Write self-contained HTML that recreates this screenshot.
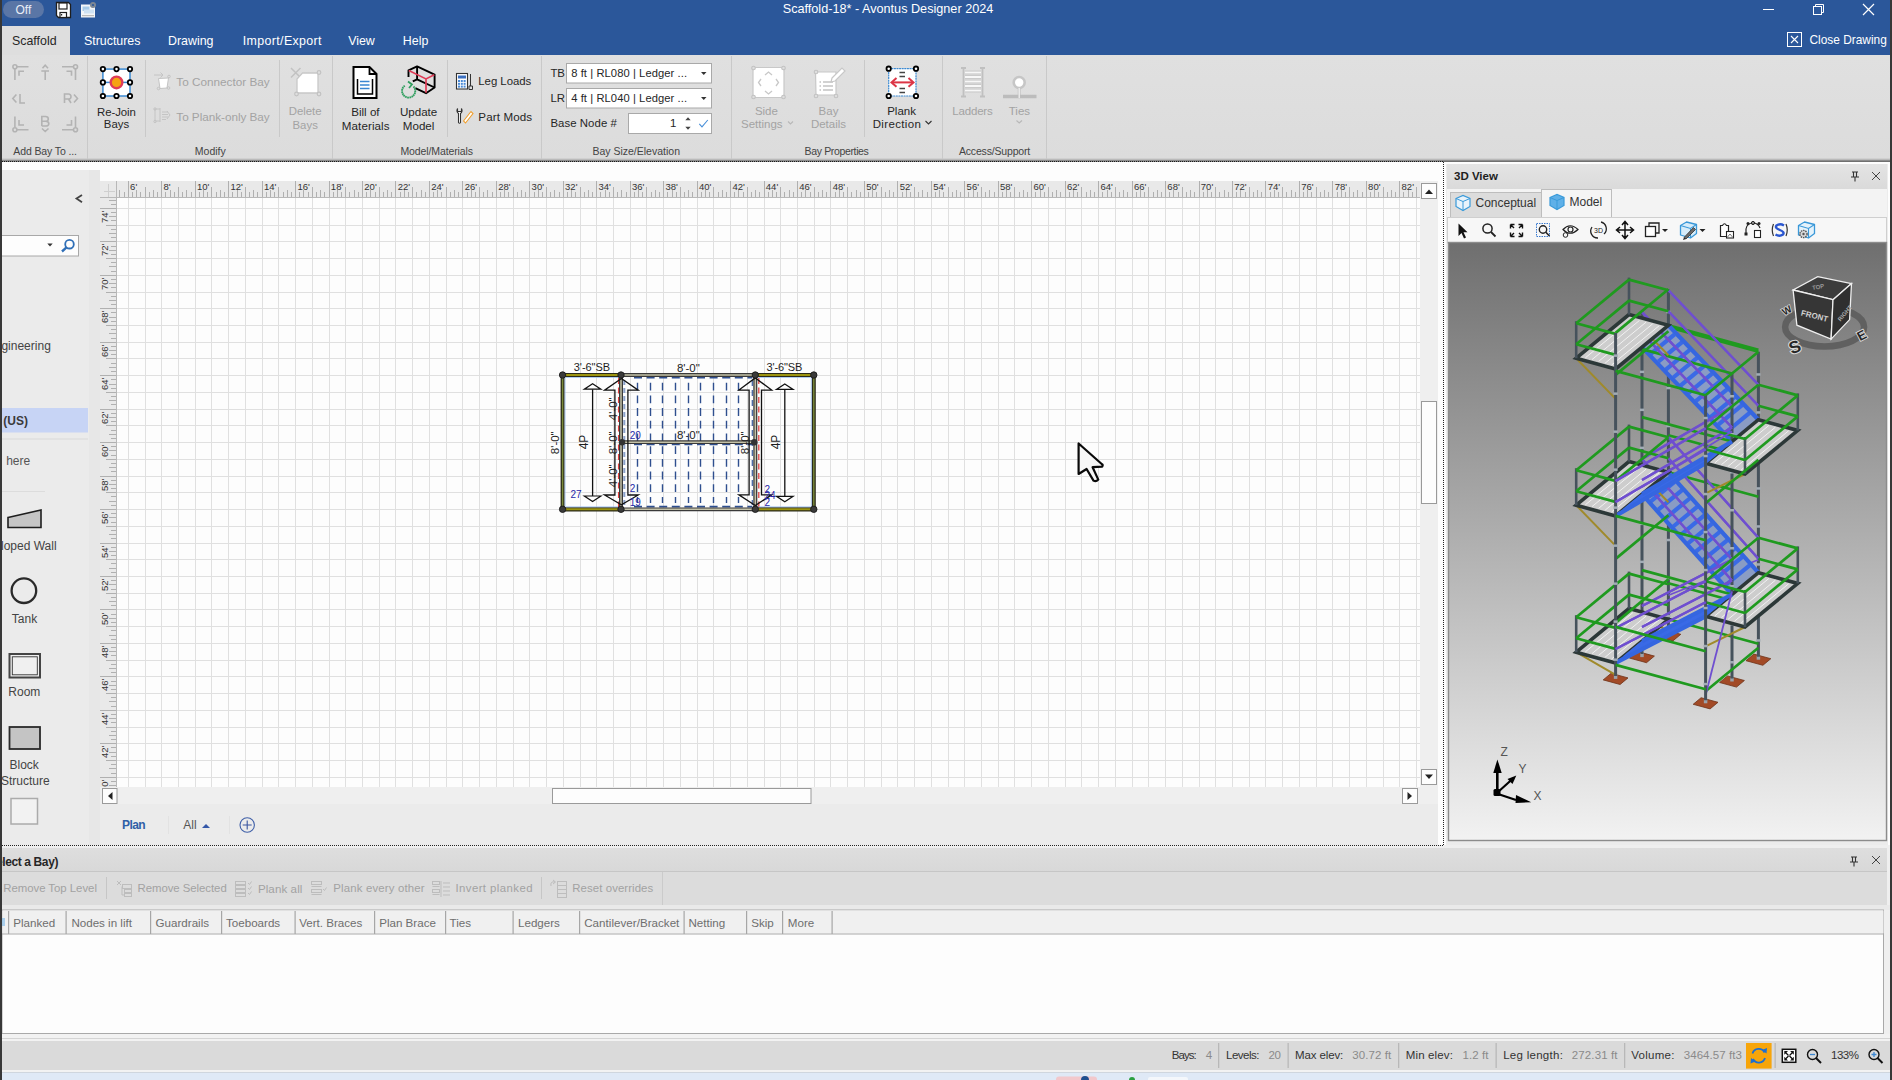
<!DOCTYPE html>
<html><head><meta charset="utf-8"><title>Avontus Designer</title>
<style>
*{box-sizing:border-box;margin:0;padding:0}
html,body{width:1892px;height:1080px;overflow:hidden;background:#f0f0f0;font-family:"Liberation Sans",sans-serif;}
#root{position:relative;width:1892px;height:1080px;overflow:hidden;background:#fdfdfd}
.a{position:absolute}
.t{position:absolute;white-space:nowrap;line-height:1}

</style></head><body>
<div id="root">
<div class="a" style="left:0px;top:0px;width:1892px;height:55px;background:#2b579a;"></div>
<div class="a" style="left:0px;top:0px;width:2px;height:1080px;background:#383838;z-index:50"></div>
<div class="a" style="left:1890px;top:0px;width:2px;height:1080px;background:#383838;z-index:50"></div>
<div class="a" style="left:3px;top:1px;width:41px;height:17px;background:#5a76a6;border-radius:9px"></div>
<div class="t" style="left:15.50px;top:3.80px;font-size:12px;color:#e9eef6;">Off</div>
<svg class="a" style="left:55px;top:1px;" width="17" height="18" viewBox="0 0 17 18"><path d="M1.5 1.5h12l2 2v13h-12l-2-2z" fill="#fff" stroke="#1e1e1e" stroke-width="1.3"/>
<rect x="4" y="2" width="8" height="6" fill="#fff" stroke="#1e1e1e" stroke-width="1.2"/>
<rect x="5" y="11.5" width="6.5" height="5" fill="#fff" stroke="#1e1e1e" stroke-width="1.2"/><rect x="6" y="13" width="1.2" height="1.5" fill="#1e1e1e"/></svg>
<svg class="a" style="left:80px;top:1px;" width="18" height="18" viewBox="0 0 18 18"><rect x="1" y="3.5" width="14" height="13" fill="#f4f6f8"/>
<rect x="2.5" y="5.5" width="7" height="4.5" fill="#a7cbe9"/>
<rect x="4" y="8.5" width="10" height="4" fill="#cfe2f3"/>
<rect x="2" y="14" width="12" height="1.2" fill="#bbb"/>
<circle cx="13" cy="4" r="3" fill="#7d8794"/><circle cx="13" cy="4" r="1.1" fill="#2b579a"/></svg>
<div class="t" style="left:782.70px;top:2.73px;font-size:12.66px;color:#fff;">Scaffold-18* - Avontus Designer 2024</div>
<div class="a" style="left:1763px;top:9px;width:11px;height:1px;background:#fff;"></div>
<svg class="a" style="left:1812px;top:3px;" width="13" height="13" viewBox="0 0 13 13"><rect x="1.5" y="3.5" width="8" height="8" fill="none" stroke="#fff"/><path d="M3.5 3.5v-2h8v8h-2" fill="none" stroke="#fff"/></svg>
<svg class="a" style="left:1862px;top:3px;" width="13" height="13" viewBox="0 0 13 13"><path d="M1 1L12 12M12 1L1 12" stroke="#fff" stroke-width="1.2"/></svg>
<div class="a" style="left:2px;top:26px;width:68px;height:30px;background:#dedede;"></div>
<div class="t" style="left:12.00px;top:34.76px;font-size:12.4px;color:#262626;">Scaffold</div>
<div class="t" style="left:84.00px;top:34.76px;font-size:12.4px;color:#fff;letter-spacing:-0.001px;">Structures</div>
<div class="t" style="left:168.00px;top:34.76px;font-size:12.4px;color:#fff;">Drawing</div>
<div class="t" style="left:242.80px;top:34.76px;font-size:12.4px;color:#fff;letter-spacing:0.365px;">Import/Export</div>
<div class="t" style="left:348.20px;top:34.76px;font-size:12.4px;color:#fff;">View</div>
<div class="t" style="left:402.80px;top:34.76px;font-size:12.4px;color:#fff;">Help</div>
<svg class="a" style="left:1787px;top:32px;" width="16" height="16" viewBox="0 0 16 16"><rect x="0.5" y="0.5" width="14" height="14" fill="none" stroke="#fff"/><path d="M4 4l7 7M11 4l-7 7" stroke="#fff" stroke-width="1.1"/></svg>
<div class="t" style="left:1809.50px;top:34.81px;font-size:11.9px;color:#fff;">Close Drawing</div>
<div class="a" style="left:2px;top:55px;width:1888px;height:106px;background:#dedede;"></div>
<div class="a" style="left:2px;top:55px;width:1888px;height:104px;background:linear-gradient(#e0e0e0,#dcdcdc);"></div>
<div class="a" style="left:2px;top:158px;width:1888px;height:1px;background:#d0d0d0;"></div>
<div class="a" style="left:2px;top:159px;width:1888px;height:1px;background:#bababa;"></div>
<div class="a" style="left:2px;top:160px;width:1888px;height:1px;background:#8c8c8c;"></div>
<div class="a" style="left:2px;top:161px;width:1441px;height:1px;background:repeating-linear-gradient(90deg,#1a1a1a 0 1px,#8a8a8a 1px 2px);"></div>
<div class="a" style="left:1443px;top:161px;width:447px;height:1px;background:#6f6f6f;"></div>
<svg class="a" style="left:0px;top:55px;" width="1892" height="107" viewBox="0 55 1892 107"><rect x="87" y="56" width="1" height="103" fill="#c9c9c9"/><rect x="332" y="56" width="1" height="103" fill="#c9c9c9"/><rect x="541" y="56" width="1" height="103" fill="#c9c9c9"/><rect x="731" y="56" width="1" height="103" fill="#c9c9c9"/><rect x="942" y="56" width="1" height="103" fill="#c9c9c9"/><rect x="1046" y="56" width="1" height="103" fill="#c9c9c9"/><rect x="145" y="60" width="1" height="77" fill="#c9c9c9"/><rect x="279" y="60" width="1" height="77" fill="#c9c9c9"/><rect x="447" y="60" width="1" height="77" fill="#c9c9c9"/><rect x="864" y="60" width="1" height="77" fill="#c9c9c9"/><g stroke="#b3b3b3" stroke-width="1.6" fill="none"><circle cx="14.9" cy="66.7" r="2"/><path d="M17 66.7H28.5M14.9 68.8V80M19 75.8V71.3H24"/><path d="M42.5 68.2L45.2 65.2L48 68.2M41.3 71H49M45.2 71V80"/><circle cx="75.5" cy="66.7" r="2"/><path d="M73.5 66.7H62M75.5 68.8V80M71.5 75.8V71.3H66.5"/><path d="M16.4 94.5L12.8 98.5L16.4 102.5M20 94V103H25"/><path d="M64.5 103V94H68.5Q71 94 71 96.7Q71 99 68.5 99H64.5M68.5 99L71 103M74 94.5L77.5 98.5L74 102.5"/><circle cx="14.9" cy="129.7" r="2"/><path d="M17 129.7H28.5M14.9 127.6V116.4M19 120V125H24"/><path d="M41.8 126V116.5H45.5Q48.3 116.5 48.3 119Q48.3 121.3 45.5 121.3H41.8M45.5 121.3Q48.8 121.3 48.8 123.7Q48.8 126 45.5 126H41.8M42 128.5L45.2 131.5L48.5 128.5"/><circle cx="75.5" cy="129.7" r="2"/><path d="M73.5 129.7H62M75.5 127.6V116.4M71.5 120V125H66.5"/></g><rect x="102.9" y="69.1" width="27.1" height="26.9" fill="#fff" stroke="#3b8ad3" stroke-width="1.5"/><path d="M102.9 82.4H130" stroke="#3b8ad3" stroke-width="1.5"/><circle cx="116.5" cy="82.4" r="5.8" fill="#f5a312" stroke="#e03c57" stroke-width="2.4"/><circle cx="102.9" cy="69.1" r="2.2" fill="#fff" stroke="#000" stroke-width="1.8"/><circle cx="102.9" cy="82.4" r="2.2" fill="#fff" stroke="#000" stroke-width="1.8"/><circle cx="102.9" cy="96" r="2.2" fill="#fff" stroke="#000" stroke-width="1.8"/><circle cx="116.5" cy="69.1" r="2.2" fill="#fff" stroke="#000" stroke-width="1.8"/><circle cx="116.5" cy="96" r="2.2" fill="#fff" stroke="#000" stroke-width="1.8"/><circle cx="130" cy="69.1" r="2.2" fill="#fff" stroke="#000" stroke-width="1.8"/><circle cx="130" cy="82.4" r="2.2" fill="#fff" stroke="#000" stroke-width="1.8"/><circle cx="130" cy="96" r="2.2" fill="#fff" stroke="#000" stroke-width="1.8"/><path d="M158.5 78.5L168.5 78L167 88L160 88.5Z" fill="#fff" stroke="#c4c4c4" stroke-width="1"/><path d="M154 75H163M160.5 72.5L163 75L160.5 77.5" stroke="#c4c4c4" stroke-width="1" fill="none"/><circle cx="158.5" cy="88.5" r="1.3" fill="none" stroke="#c4c4c4"/><circle cx="168.5" cy="88" r="1.3" fill="none" stroke="#c4c4c4"/><circle cx="169" cy="76.5" r="1.3" fill="none" stroke="#c4c4c4"/><g stroke="#c4c4c4" stroke-width="1" fill="none"><path d="M155 109V121M160 108V122M154.5 109H160M154.5 121H160M162 112H168M162 114.5H168M162 117H168M162 119.5H166M167 111L170 115L167 119"/><circle cx="155" cy="109" r="1.2"/><circle cx="155" cy="121.5" r="1.2"/></g><g stroke="#c2c2c2" stroke-width="1.5" fill="none"><path d="M291 68L300.5 77.5M300.5 68L291 77.5"/></g><path d="M302.5 73H318V93H297V79L302.5 73Z" fill="#fff" stroke="#c8c8c8" stroke-width="1.3"/><g fill="#dedede" stroke="#c2c2c2" stroke-width="1.2"><circle cx="319" cy="72.5" r="1.8"/><circle cx="296.5" cy="94" r="1.8"/><circle cx="319" cy="94" r="1.8"/></g><path d="M353.5 67H369.5L376.5 74V98H353.5Z" fill="#fff" stroke="#000" stroke-width="2"/><path d="M369.5 67V74H376.5" fill="none" stroke="#000" stroke-width="1.8"/><path d="M357.5 79V94H372.5V79" fill="none" stroke="#000" stroke-width="1.5"/><g stroke="#3a86d1" stroke-width="1.4"><path d="M360 81.5H369.5M360 85H369.5M360 88.5H369.5"/></g><g fill="none" stroke="#000" stroke-width="1.9" stroke-linejoin="round"><path d="M408.5 77V70.3L417.1 66.4L434.6 74.6V87.5L426 93.2L415.3 88.2"/><path d="M417.1 66.4V79.3L412.8 81.4M417.1 79.3L434.6 87.5"/></g><path d="M409 70.3L422 76.8" fill="none" stroke="#e8e8e8" stroke-width="0"/><path d="M408.8 70.5L426 78.9L434.3 74.8M426 78.9V92.8" fill="none" stroke="#e03c57" stroke-width="1.7"/><path d="M413.5 86.5A6.6 6.6 0 1 1 405 85.5" fill="none" stroke="#2f9e5e" stroke-width="1.9" stroke-dasharray="1.6 0.5"/><path d="M408 81.5L412 84.5L409 88" fill="none" stroke="#2f9e5e" stroke-width="1.7"/><rect x="456.5" y="73.5" width="11" height="15.5" fill="#fff" stroke="#333" stroke-width="1.1"/><rect x="458" y="75.5" width="8" height="3" fill="#3a6fc0"/><rect x="458.0" y="80.0" width="2" height="2" fill="#4a8ad6"/><rect x="460.8" y="80.0" width="2" height="2" fill="#4a8ad6"/><rect x="463.6" y="80.0" width="2" height="2" fill="#4a8ad6"/><rect x="458.0" y="82.8" width="2" height="2" fill="#4a8ad6"/><rect x="460.8" y="82.8" width="2" height="2" fill="#4a8ad6"/><rect x="463.6" y="82.8" width="2" height="2" fill="#4a8ad6"/><rect x="458.0" y="85.6" width="2" height="2" fill="#4a8ad6"/><rect x="460.8" y="85.6" width="2" height="2" fill="#4a8ad6"/><rect x="463.6" y="85.6" width="2" height="2" fill="#4a8ad6"/><path d="M470.5 74V86M469 86H472.5V89.5H469Z" stroke="#333" stroke-width="1" fill="none"/><path d="M457.5 108.5Q456 111.5 458.5 113.5V122.5Q459.5 124 460.5 122.5V113.5Q463 111.5 461.5 108.5V111.5H457.5Z" fill="#fff" stroke="#333" stroke-width="1.1"/><path d="M463.5 121L471 111.5L473 113.5L465.5 123Z" fill="#fff" stroke="#f0a030" stroke-width="1.1"/><rect x="566.5" y="63.5" width="145" height="19.5" fill="#fff" stroke="#a9a9a9"/><path d="M701 72H706.5L703.75 75Z" fill="#333"/><rect x="566.5" y="88.5" width="145" height="19.5" fill="#fff" stroke="#a9a9a9"/><path d="M701 97H706.5L703.75 100Z" fill="#333"/><rect x="628.5" y="113.5" width="83" height="20" fill="#fff" stroke="#a9a9a9"/><path d="M685.3 120.2H690.7L688 117.3ZM685.3 126.8H690.7L688 129.7Z" fill="#444"/><path d="M699.3 123.8L702 126.8L707.8 120" fill="none" stroke="#4a90d9" stroke-width="1.1"/><rect x="753" y="67.5" width="31" height="30" rx="3" fill="#fff" stroke="#c8c8c8" stroke-width="1.2"/><g fill="#dedede" stroke="#c2c2c2" stroke-width="1.1"><circle cx="753.5" cy="68" r="1.8"/><circle cx="783.5" cy="68" r="1.8"/><circle cx="753.5" cy="97" r="1.8"/><circle cx="783.5" cy="97" r="1.8"/></g><g fill="none" stroke="#c8c8c8" stroke-width="1.3"><path d="M765 75L768.5 72L772 75M765 91L768.5 94L772 91M761 79L758.5 82.5L761 86M776 79L778.5 82.5L776 86"/></g><path d="M815.5 72H836V95H816Z" fill="#fff" stroke="#c8c8c8" stroke-width="1.2"/><g stroke="#c4c4c4" stroke-width="1.4"><path d="M819.5 82H821M823 82H833M819.5 86H821M823 86H833M819.5 90H821M823 90H833"/></g><g fill="#dedede" stroke="#c2c2c2" stroke-width="1.1"><circle cx="816" cy="72" r="1.8"/><circle cx="816" cy="96" r="1.8"/><circle cx="836" cy="96" r="1.8"/></g><path d="M832 78L842 68L845 71L835 81L831 82Z" fill="#fff" stroke="#c8c8c8" stroke-width="1.2"/><rect x="888.7" y="68.7" width="27.3" height="27.3" fill="#fff" stroke="#3b8ad3" stroke-width="1.2" stroke-dasharray="2 0.6"/><g stroke="#444" stroke-width="1.5"><path d="M899.5 72.5H905M899.5 76.5H905M899.5 88.5H905M899.5 92.5H905"/></g><path d="M892 82.4H913" stroke="#dc3545" stroke-width="2"/><path d="M896.5 78L891.5 82.4L896.5 86.8M908.5 78L913.5 82.4L908.5 86.8" fill="none" stroke="#dc3545" stroke-width="2"/><circle cx="888.7" cy="68.7" r="2.2" fill="#fff" stroke="#000" stroke-width="1.8"/><circle cx="888.7" cy="96" r="2.2" fill="#fff" stroke="#000" stroke-width="1.8"/><circle cx="916" cy="68.7" r="2.2" fill="#fff" stroke="#000" stroke-width="1.8"/><circle cx="916" cy="96" r="2.2" fill="#fff" stroke="#000" stroke-width="1.8"/><g stroke="#c0c0c0" stroke-width="1.8" fill="none"><path d="M963.5 67V97M982.5 67V97M961 68H966M980 68H985M961 96.5H966M980 96.5H985"/></g><g stroke="#f7f7f7" stroke-width="2.2"><path d="M965 72.5H981M965 77H981M965 81.5H981M965 86H981M965 90.5H981"/></g><g stroke="#c4c4c4" stroke-width="0.8"><path d="M965 71H981M965 74H981M965 75.5H981M965 78.5H981M965 80H981M965 83H981M965 84.5H981M965 87.5H981M965 89H981M965 92H981"/></g><circle cx="1019.2" cy="82.5" r="5.5" fill="#fff" stroke="#c6c6c6" stroke-width="2.6"/><path d="M1019.2 88V97" stroke="#c6c6c6" stroke-width="3"/><path d="M1003 96.5H1036.5" stroke="#bcbcbc" stroke-width="3.5"/><path d="M1019.2 88V98" stroke="#f4f4f4" stroke-width="1.2"/><g fill="none" stroke-width="1.1"><path d="M788 121.5L790.5 124L793 121.5" stroke="#b8b8b8"/><path d="M925.5 121L928.5 124L931.5 121" stroke="#333"/><path d="M1016.5 120.5L1019.2 123L1022 120.5" stroke="#b8b8b8"/></g></svg>
<div class="t" style="left:13.30px;top:146.45px;font-size:10.5px;color:#444444;letter-spacing:-0.114px;">Add Bay To ...</div>
<div class="t" style="left:97.05px;top:106.86px;font-size:11.4px;color:#262626;letter-spacing:-0.064px;">Re-Join</div>
<div class="t" style="left:103.83px;top:119.46px;font-size:11.4px;color:#262626;">Bays</div>
<div class="t" style="left:176.30px;top:76.03px;font-size:11.75px;color:#a3a3a3;letter-spacing:0.000px;">To Connector Bay</div>
<div class="t" style="left:176.30px;top:110.73px;font-size:11.75px;color:#a3a3a3;letter-spacing:-0.040px;">To Plank-only Bay</div>
<div class="t" style="left:288.85px;top:105.86px;font-size:11.4px;color:#a3a3a3;letter-spacing:-0.051px;">Delete</div>
<div class="t" style="left:292.53px;top:119.56px;font-size:11.4px;color:#a3a3a3;">Bays</div>
<div class="t" style="left:194.84px;top:146.45px;font-size:10.5px;color:#444444;">Modify</div>
<div class="t" style="left:351.22px;top:105.84px;font-size:11.6px;color:#262626;">Bill of</div>
<div class="t" style="left:341.80px;top:119.54px;font-size:11.6px;color:#262626;letter-spacing:0.093px;">Materials</div>
<div class="t" style="left:399.90px;top:105.84px;font-size:11.6px;color:#262626;">Update</div>
<div class="t" style="left:402.80px;top:119.54px;font-size:11.6px;color:#262626;">Model</div>
<div class="t" style="left:478.30px;top:76.06px;font-size:11.4px;color:#262626;letter-spacing:-0.031px;">Leg Loads</div>
<div class="t" style="left:478.30px;top:110.74px;font-size:11.6px;color:#262626;letter-spacing:0.130px;">Part Mods</div>
<div class="t" style="left:400.40px;top:146.45px;font-size:10.5px;color:#444444;letter-spacing:-0.108px;">Model/Materials</div>
<div class="t" style="left:550.40px;top:67.66px;font-size:11.4px;color:#262626;">TB</div>
<div class="t" style="left:550.40px;top:92.66px;font-size:11.4px;color:#262626;">LR</div>
<div class="t" style="left:571.20px;top:67.88px;font-size:11.2px;color:#262626;letter-spacing:0.077px;">8 ft | RL080 | Ledger ...</div>
<div class="t" style="left:571.20px;top:92.88px;font-size:11.2px;color:#262626;letter-spacing:0.077px;">4 ft | RL040 | Ledger ...</div>
<div class="t" style="left:550.40px;top:117.66px;font-size:11.4px;color:#262626;letter-spacing:0.059px;">Base Node #</div>
<div class="t" style="left:670.00px;top:117.86px;font-size:11.4px;color:#262626;">1</div>
<div class="t" style="left:592.43px;top:146.45px;font-size:10.5px;color:#444444;">Bay Size/Elevation</div>
<div class="t" style="left:754.89px;top:105.85px;font-size:11.5px;color:#a3a3a3;">Side</div>
<div class="t" style="left:741.00px;top:119.05px;font-size:11.5px;color:#a3a3a3;">Settings</div>
<div class="t" style="left:818.59px;top:105.85px;font-size:11.5px;color:#a3a3a3;">Bay</div>
<div class="t" style="left:810.92px;top:119.05px;font-size:11.5px;color:#a3a3a3;">Details</div>
<div class="t" style="left:887.20px;top:105.85px;font-size:11.5px;color:#262626;letter-spacing:0.008px;">Plank</div>
<div class="t" style="left:872.70px;top:119.05px;font-size:11.5px;color:#262626;letter-spacing:0.353px;">Direction</div>
<div class="t" style="left:804.55px;top:146.45px;font-size:10.5px;color:#444444;letter-spacing:-0.351px;">Bay Properties</div>
<div class="t" style="left:952.20px;top:105.85px;font-size:11.5px;color:#a3a3a3;letter-spacing:-0.160px;">Ladders</div>
<div class="t" style="left:1008.75px;top:105.85px;font-size:11.5px;color:#a3a3a3;">Ties</div>
<div class="t" style="left:958.95px;top:146.45px;font-size:10.5px;color:#444444;letter-spacing:-0.172px;">Access/Support</div>
<div class="a" style="left:2px;top:162px;width:1441px;height:683px;background:#fdfdfd;"></div>
<div class="a" style="left:2px;top:170px;width:98px;height:675px;background:#ebebeb;"></div>
<div class="a" style="left:89px;top:170px;width:11px;height:675px;background:#e7e7e7;"></div>
<svg class="a" style="left:0px;top:162px;" width="100" height="683" viewBox="0 162 100 683"><path d="M82 195L76.5 198.6L82 202.2" fill="none" stroke="#444" stroke-width="1.8"/><rect x="1.5" y="235.5" width="77" height="20.5" fill="#fdfdfd" stroke="#a8a8a8"/><path d="M47.3 243.6H52.7L50 246.4Z" fill="#333"/><circle cx="69.5" cy="244.2" r="4.3" fill="none" stroke="#2f6fb7" stroke-width="1.8"/><path d="M66.5 247.4L62 251.5" stroke="#2f6fb7" stroke-width="2.4"/><rect x="2" y="408" width="86" height="24.5" fill="#c7d4f5"/><rect x="2" y="438.5" width="86" height="1" fill="#dadada"/><rect x="2" y="491" width="43" height="1" fill="#dcdcdc"/><path d="M8 517.5L41 510V527.5H8Z" fill="#c5c5c5" stroke="#1e1e1e" stroke-width="1.6"/><circle cx="23.9" cy="590.7" r="12.3" fill="none" stroke="#2a2a2a" stroke-width="2.3"/><rect x="9.5" y="654" width="30.5" height="23.5" fill="#f0f0f0" stroke="#444" stroke-width="2"/><rect x="12.3" y="656.8" width="25" height="18" fill="none" stroke="#333" stroke-width="0.9"/><rect x="9.5" y="727" width="30.5" height="22" fill="#c4c4c4" stroke="#2a2a2a" stroke-width="1.8"/><rect x="11" y="798.5" width="26.5" height="25.5" fill="#f2f2f2" stroke="#ababab" stroke-width="1.5"/></svg>
<div class="t" style="left:-13.25px;top:339.80px;font-size:12px;color:#444;">Engineering</div>
<div class="t" style="left:3.34px;top:414.80px;font-size:12px;color:#3a3a3a;font-weight:700;">(US)</div>
<div class="t" style="left:6.20px;top:455.30px;font-size:12px;color:#555;">here</div>
<div class="t" style="left:-6.99px;top:539.60px;font-size:12px;color:#444;">Sloped Wall</div>
<div class="t" style="left:11.80px;top:613.30px;font-size:12px;color:#444;">Tank</div>
<div class="t" style="left:8.30px;top:686.10px;font-size:12px;color:#444;">Room</div>
<div class="t" style="left:9.50px;top:759.30px;font-size:12px;color:#444;">Block</div>
<div class="t" style="left:1.01px;top:775.40px;font-size:12px;color:#444;">Structure</div>
<svg class="a" style="left:100px;top:162px;" width="1345" height="684" viewBox="100 162 1345 684"><defs><pattern id="dots" width="2" height="1" patternUnits="userSpaceOnUse"><rect width="1" height="1" fill="#222"/></pattern><pattern id="dotsv" width="1" height="2" patternUnits="userSpaceOnUse"><rect width="1" height="1" fill="#222"/></pattern></defs><rect x="117" y="198" width="1303" height="589" fill="#fdfdfd"/><path d="M128.5 198V787M145.5 198V787M161.5 198V787M178.5 198V787M195.5 198V787M211.5 198V787M228.5 198V787M245.5 198V787M262.5 198V787M278.5 198V787M295.5 198V787M312.5 198V787M329.5 198V787M345.5 198V787M362.5 198V787M379.5 198V787M395.5 198V787M412.5 198V787M429.5 198V787M446.5 198V787M462.5 198V787M479.5 198V787M496.5 198V787M513.5 198V787M529.5 198V787M546.5 198V787M563.5 198V787M580.5 198V787M596.5 198V787M613.5 198V787M630.5 198V787M646.5 198V787M663.5 198V787M680.5 198V787M697.5 198V787M713.5 198V787M730.5 198V787M747.5 198V787M764.5 198V787M780.5 198V787M797.5 198V787M814.5 198V787M830.5 198V787M847.5 198V787M864.5 198V787M881.5 198V787M897.5 198V787M914.5 198V787M931.5 198V787M948.5 198V787M964.5 198V787M981.5 198V787M998.5 198V787M1014.5 198V787M1031.5 198V787M1048.5 198V787M1065.5 198V787M1081.5 198V787M1098.5 198V787M1115.5 198V787M1132.5 198V787M1148.5 198V787M1165.5 198V787M1182.5 198V787M1199.5 198V787M1215.5 198V787M1232.5 198V787M1249.5 198V787M1265.5 198V787M1282.5 198V787M1299.5 198V787M1316.5 198V787M1332.5 198V787M1349.5 198V787M1366.5 198V787M1383.5 198V787M1399.5 198V787M1416.5 198V787M117 208.5H1420M117 225.5H1420M117 241.5H1420M117 258.5H1420M117 275.5H1420M117 292.5H1420M117 308.5H1420M117 325.5H1420M117 342.5H1420M117 358.5H1420M117 375.5H1420M117 392.5H1420M117 409.5H1420M117 425.5H1420M117 442.5H1420M117 459.5H1420M117 476.5H1420M117 492.5H1420M117 509.5H1420M117 526.5H1420M117 543.5H1420M117 559.5H1420M117 576.5H1420M117 593.5H1420M117 609.5H1420M117 626.5H1420M117 643.5H1420M117 660.5H1420M117 676.5H1420M117 693.5H1420M117 710.5H1420M117 727.5H1420M117 743.5H1420M117 760.5H1420M117 777.5H1420" stroke="#e0e0e0" stroke-width="1" shape-rendering="crispEdges"/><rect x="100" y="181" width="1320" height="17" fill="#e9e9e9"/><rect x="100" y="181" width="17" height="606" fill="#e9e9e9"/><path d="M119.5 198V190M124.5 198V192M128.5 198V181M132.5 198V192M136.5 198V190M140.5 198V192M145.5 198V187M149.5 198V192M153.5 198V190M157.5 198V192M161.5 198V181M165.5 198V192M170.5 198V190M174.5 198V192M178.5 198V187M182.5 198V192M186.5 198V190M191.5 198V192M195.5 198V181M199.5 198V192M203.5 198V190M207.5 198V192M211.5 198V187M216.5 198V192M220.5 198V190M224.5 198V192M228.5 198V181M232.5 198V192M237.5 198V190M241.5 198V192M245.5 198V187M249.5 198V192M253.5 198V190M257.5 198V192M262.5 198V181M266.5 198V192M270.5 198V190M274.5 198V192M278.5 198V187M283.5 198V192M287.5 198V190M291.5 198V192M295.5 198V181M299.5 198V192M303.5 198V190M308.5 198V192M312.5 198V187M316.5 198V192M320.5 198V190M324.5 198V192M329.5 198V181M333.5 198V192M337.5 198V190M341.5 198V192M345.5 198V187M349.5 198V192M354.5 198V190M358.5 198V192M362.5 198V181M366.5 198V192M370.5 198V190M375.5 198V192M379.5 198V187M383.5 198V192M387.5 198V190M391.5 198V192M395.5 198V181M400.5 198V192M404.5 198V190M408.5 198V192M412.5 198V187M416.5 198V192M421.5 198V190M425.5 198V192M429.5 198V181M433.5 198V192M437.5 198V190M441.5 198V192M446.5 198V187M450.5 198V192M454.5 198V190M458.5 198V192M462.5 198V181M467.5 198V192M471.5 198V190M475.5 198V192M479.5 198V187M483.5 198V192M487.5 198V190M492.5 198V192M496.5 198V181M500.5 198V192M504.5 198V190M508.5 198V192M513.5 198V187M517.5 198V192M521.5 198V190M525.5 198V192M529.5 198V181M534.5 198V192M538.5 198V190M542.5 198V192M546.5 198V187M550.5 198V192M554.5 198V190M559.5 198V192M563.5 198V181M567.5 198V192M571.5 198V190M575.5 198V192M580.5 198V187M584.5 198V192M588.5 198V190M592.5 198V192M596.5 198V181M600.5 198V192M605.5 198V190M609.5 198V192M613.5 198V187M617.5 198V192M621.5 198V190M626.5 198V192M630.5 198V181M634.5 198V192M638.5 198V190M642.5 198V192M646.5 198V187M651.5 198V192M655.5 198V190M659.5 198V192M663.5 198V181M667.5 198V192M672.5 198V190M676.5 198V192M680.5 198V187M684.5 198V192M688.5 198V190M692.5 198V192M697.5 198V181M701.5 198V192M705.5 198V190M709.5 198V192M713.5 198V187M718.5 198V192M722.5 198V190M726.5 198V192M730.5 198V181M734.5 198V192M738.5 198V190M743.5 198V192M747.5 198V187M751.5 198V192M755.5 198V190M759.5 198V192M764.5 198V181M768.5 198V192M772.5 198V190M776.5 198V192M780.5 198V187M784.5 198V192M789.5 198V190M793.5 198V192M797.5 198V181M801.5 198V192M805.5 198V190M810.5 198V192M814.5 198V187M818.5 198V192M822.5 198V190M826.5 198V192M830.5 198V181M835.5 198V192M839.5 198V190M843.5 198V192M847.5 198V187M851.5 198V192M856.5 198V190M860.5 198V192M864.5 198V181M868.5 198V192M872.5 198V190M876.5 198V192M881.5 198V187M885.5 198V192M889.5 198V190M893.5 198V192M897.5 198V181M902.5 198V192M906.5 198V190M910.5 198V192M914.5 198V187M918.5 198V192M922.5 198V190M927.5 198V192M931.5 198V181M935.5 198V192M939.5 198V190M943.5 198V192M948.5 198V187M952.5 198V192M956.5 198V190M960.5 198V192M964.5 198V181M968.5 198V192M973.5 198V190M977.5 198V192M981.5 198V187M985.5 198V192M989.5 198V190M994.5 198V192M998.5 198V181M1002.5 198V192M1006.5 198V190M1010.5 198V192M1014.5 198V187M1019.5 198V192M1023.5 198V190M1027.5 198V192M1031.5 198V181M1035.5 198V192M1040.5 198V190M1044.5 198V192M1048.5 198V187M1052.5 198V192M1056.5 198V190M1060.5 198V192M1065.5 198V181M1069.5 198V192M1073.5 198V190M1077.5 198V192M1081.5 198V187M1086.5 198V192M1090.5 198V190M1094.5 198V192M1098.5 198V181M1102.5 198V192M1107.5 198V190M1111.5 198V192M1115.5 198V187M1119.5 198V192M1123.5 198V190M1127.5 198V192M1132.5 198V181M1136.5 198V192M1140.5 198V190M1144.5 198V192M1148.5 198V187M1153.5 198V192M1157.5 198V190M1161.5 198V192M1165.5 198V181M1169.5 198V192M1173.5 198V190M1178.5 198V192M1182.5 198V187M1186.5 198V192M1190.5 198V190M1194.5 198V192M1199.5 198V181M1203.5 198V192M1207.5 198V190M1211.5 198V192M1215.5 198V187M1219.5 198V192M1224.5 198V190M1228.5 198V192M1232.5 198V181M1236.5 198V192M1240.5 198V190M1245.5 198V192M1249.5 198V187M1253.5 198V192M1257.5 198V190M1261.5 198V192M1265.5 198V181M1270.5 198V192M1274.5 198V190M1278.5 198V192M1282.5 198V187M1286.5 198V192M1291.5 198V190M1295.5 198V192M1299.5 198V181M1303.5 198V192M1307.5 198V190M1311.5 198V192M1316.5 198V187M1320.5 198V192M1324.5 198V190M1328.5 198V192M1332.5 198V181M1337.5 198V192M1341.5 198V190M1345.5 198V192M1349.5 198V187M1353.5 198V192M1357.5 198V190M1362.5 198V192M1366.5 198V181M1370.5 198V192M1374.5 198V190M1378.5 198V192M1383.5 198V187M1387.5 198V192M1391.5 198V190M1395.5 198V192M1399.5 198V181M1403.5 198V192M1408.5 198V190M1412.5 198V192M1416.5 198V187M117 200.5H109M117 204.5H111M117 208.5H100M117 212.5H111M117 216.5H109M117 220.5H111M117 225.5H106M117 229.5H111M117 233.5H109M117 237.5H111M117 241.5H100M117 246.5H111M117 250.5H109M117 254.5H111M117 258.5H106M117 262.5H111M117 266.5H109M117 271.5H111M117 275.5H100M117 279.5H111M117 283.5H109M117 287.5H111M117 292.5H106M117 296.5H111M117 300.5H109M117 304.5H111M117 308.5H100M117 312.5H111M117 317.5H109M117 321.5H111M117 325.5H106M117 329.5H111M117 333.5H109M117 338.5H111M117 342.5H100M117 346.5H111M117 350.5H109M117 354.5H111M117 358.5H106M117 363.5H111M117 367.5H109M117 371.5H111M117 375.5H100M117 379.5H111M117 384.5H109M117 388.5H111M117 392.5H106M117 396.5H111M117 400.5H109M117 404.5H111M117 409.5H100M117 413.5H111M117 417.5H109M117 421.5H111M117 425.5H106M117 430.5H111M117 434.5H109M117 438.5H111M117 442.5H100M117 446.5H111M117 450.5H109M117 455.5H111M117 459.5H106M117 463.5H111M117 467.5H109M117 471.5H111M117 476.5H100M117 480.5H111M117 484.5H109M117 488.5H111M117 492.5H106M117 496.5H111M117 501.5H109M117 505.5H111M117 509.5H100M117 513.5H111M117 517.5H109M117 522.5H111M117 526.5H106M117 530.5H111M117 534.5H109M117 538.5H111M117 543.5H100M117 547.5H111M117 551.5H109M117 555.5H111M117 559.5H106M117 563.5H111M117 568.5H109M117 572.5H111M117 576.5H100M117 580.5H111M117 584.5H109M117 589.5H111M117 593.5H106M117 597.5H111M117 601.5H109M117 605.5H111M117 609.5H100M117 614.5H111M117 618.5H109M117 622.5H111M117 626.5H106M117 630.5H111M117 635.5H109M117 639.5H111M117 643.5H100M117 647.5H111M117 651.5H109M117 655.5H111M117 660.5H106M117 664.5H111M117 668.5H109M117 672.5H111M117 676.5H100M117 681.5H111M117 685.5H109M117 689.5H111M117 693.5H106M117 697.5H111M117 701.5H109M117 706.5H111M117 710.5H100M117 714.5H111M117 718.5H109M117 722.5H111M117 727.5H106M117 731.5H111M117 735.5H109M117 739.5H111M117 743.5H100M117 747.5H111M117 752.5H109M117 756.5H111M117 760.5H106M117 764.5H111M117 768.5H109M117 773.5H111M117 777.5H100M117 781.5H111M117 785.5H109" stroke="#b0b0b0" stroke-width="1" shape-rendering="crispEdges"/><path d="M100 197.5H1420M116.5 181V787" stroke="#b8b8b8" stroke-width="1" shape-rendering="crispEdges"/><path d="M104 191.5H115M108.5 184V197" stroke="#cfcfcf" stroke-width="1" shape-rendering="crispEdges"/><rect x="1420" y="181" width="18" height="623" fill="#efefef"/><rect x="1421.5" y="183.5" width="15" height="15" fill="#fdfdfd" stroke="#9a9a9a"/><path d="M1425 194H1433L1429 189.5Z" fill="#222"/><rect x="1421.5" y="769.5" width="15" height="15" fill="#fdfdfd" stroke="#9a9a9a"/><path d="M1425 774.5H1433L1429 779Z" fill="#222"/><rect x="1421.5" y="401.5" width="15" height="102" fill="#fdfdfd" stroke="#9a9a9a"/><rect x="100" y="787" width="1320" height="17" fill="#efefef"/><rect x="102.5" y="788.5" width="14.5" height="15" fill="#fdfdfd" stroke="#9a9a9a"/><path d="M112.5 792V800L108 796Z" fill="#222"/><rect x="1402.5" y="788.5" width="15" height="15" fill="#fdfdfd" stroke="#9a9a9a"/><path d="M1407.5 792V800L1412 796Z" fill="#222"/><rect x="552.5" y="788.5" width="258.5" height="15" fill="#fdfdfd" stroke="#9a9a9a"/><rect x="100" y="804" width="1338" height="41" fill="#ebebeb"/><rect x="168" y="816" width="1" height="18" fill="#e2e2e2"/><rect x="229" y="816" width="1" height="18" fill="#e2e2e2"/><path d="M202 828H210L206 824Z" fill="#3457a8"/><circle cx="247.2" cy="825" r="7.2" fill="none" stroke="#4060a8" stroke-width="1.1"/><path d="M247.2 820.5V829.5M242.7 825H251.7" stroke="#3a55a0" stroke-width="1.1"/><rect x="1443" y="162" width="1" height="683" fill="url(#dotsv)"/></svg>
<div class="a" style="left:2px;top:845px;width:1441px;height:1px;background:repeating-linear-gradient(90deg,#222 0 1px,transparent 1px 2px);z-index:4"></div>
<div class="t" style="left:130.10px;top:182.45px;font-size:9.5px;color:#333;">6'</div>
<div class="t" style="left:163.56px;top:182.45px;font-size:9.5px;color:#333;">8'</div>
<div class="t" style="left:197.02px;top:182.45px;font-size:9.5px;color:#333;">10'</div>
<div class="t" style="left:230.48px;top:182.45px;font-size:9.5px;color:#333;">12'</div>
<div class="t" style="left:263.94px;top:182.45px;font-size:9.5px;color:#333;">14'</div>
<div class="t" style="left:297.40px;top:182.45px;font-size:9.5px;color:#333;">16'</div>
<div class="t" style="left:330.86px;top:182.45px;font-size:9.5px;color:#333;">18'</div>
<div class="t" style="left:364.32px;top:182.45px;font-size:9.5px;color:#333;">20'</div>
<div class="t" style="left:397.78px;top:182.45px;font-size:9.5px;color:#333;">22'</div>
<div class="t" style="left:431.24px;top:182.45px;font-size:9.5px;color:#333;">24'</div>
<div class="t" style="left:464.70px;top:182.45px;font-size:9.5px;color:#333;">26'</div>
<div class="t" style="left:498.16px;top:182.45px;font-size:9.5px;color:#333;">28'</div>
<div class="t" style="left:531.62px;top:182.45px;font-size:9.5px;color:#333;">30'</div>
<div class="t" style="left:565.08px;top:182.45px;font-size:9.5px;color:#333;">32'</div>
<div class="t" style="left:598.54px;top:182.45px;font-size:9.5px;color:#333;">34'</div>
<div class="t" style="left:632.00px;top:182.45px;font-size:9.5px;color:#333;">36'</div>
<div class="t" style="left:665.46px;top:182.45px;font-size:9.5px;color:#333;">38'</div>
<div class="t" style="left:698.92px;top:182.45px;font-size:9.5px;color:#333;">40'</div>
<div class="t" style="left:732.38px;top:182.45px;font-size:9.5px;color:#333;">42'</div>
<div class="t" style="left:765.84px;top:182.45px;font-size:9.5px;color:#333;">44'</div>
<div class="t" style="left:799.30px;top:182.45px;font-size:9.5px;color:#333;">46'</div>
<div class="t" style="left:832.76px;top:182.45px;font-size:9.5px;color:#333;">48'</div>
<div class="t" style="left:866.22px;top:182.45px;font-size:9.5px;color:#333;">50'</div>
<div class="t" style="left:899.68px;top:182.45px;font-size:9.5px;color:#333;">52'</div>
<div class="t" style="left:933.14px;top:182.45px;font-size:9.5px;color:#333;">54'</div>
<div class="t" style="left:966.60px;top:182.45px;font-size:9.5px;color:#333;">56'</div>
<div class="t" style="left:1000.06px;top:182.45px;font-size:9.5px;color:#333;">58'</div>
<div class="t" style="left:1033.52px;top:182.45px;font-size:9.5px;color:#333;">60'</div>
<div class="t" style="left:1066.98px;top:182.45px;font-size:9.5px;color:#333;">62'</div>
<div class="t" style="left:1100.44px;top:182.45px;font-size:9.5px;color:#333;">64'</div>
<div class="t" style="left:1133.90px;top:182.45px;font-size:9.5px;color:#333;">66'</div>
<div class="t" style="left:1167.36px;top:182.45px;font-size:9.5px;color:#333;">68'</div>
<div class="t" style="left:1200.82px;top:182.45px;font-size:9.5px;color:#333;">70'</div>
<div class="t" style="left:1234.28px;top:182.45px;font-size:9.5px;color:#333;">72'</div>
<div class="t" style="left:1267.74px;top:182.45px;font-size:9.5px;color:#333;">74'</div>
<div class="t" style="left:1301.20px;top:182.45px;font-size:9.5px;color:#333;">76'</div>
<div class="t" style="left:1334.66px;top:182.45px;font-size:9.5px;color:#333;">78'</div>
<div class="t" style="left:1368.12px;top:182.45px;font-size:9.5px;color:#333;">80'</div>
<div class="t" style="left:1401.58px;top:182.45px;font-size:9.5px;color:#333;">82'</div>
<div class="a" style="left:100px;top:198px;width:17px;height:589px;overflow:hidden"><div class="t" style="left:0.40px;top:24.98px;font-size:9.5px;color:#333;transform-origin:0 0;transform:rotate(-90deg)">74'</div><div class="t" style="left:0.40px;top:58.44px;font-size:9.5px;color:#333;transform-origin:0 0;transform:rotate(-90deg)">72'</div><div class="t" style="left:0.40px;top:91.90px;font-size:9.5px;color:#333;transform-origin:0 0;transform:rotate(-90deg)">70'</div><div class="t" style="left:0.40px;top:125.36px;font-size:9.5px;color:#333;transform-origin:0 0;transform:rotate(-90deg)">68'</div><div class="t" style="left:0.40px;top:158.82px;font-size:9.5px;color:#333;transform-origin:0 0;transform:rotate(-90deg)">66'</div><div class="t" style="left:0.40px;top:192.28px;font-size:9.5px;color:#333;transform-origin:0 0;transform:rotate(-90deg)">64'</div><div class="t" style="left:0.40px;top:225.74px;font-size:9.5px;color:#333;transform-origin:0 0;transform:rotate(-90deg)">62'</div><div class="t" style="left:0.40px;top:259.20px;font-size:9.5px;color:#333;transform-origin:0 0;transform:rotate(-90deg)">60'</div><div class="t" style="left:0.40px;top:292.66px;font-size:9.5px;color:#333;transform-origin:0 0;transform:rotate(-90deg)">58'</div><div class="t" style="left:0.40px;top:326.12px;font-size:9.5px;color:#333;transform-origin:0 0;transform:rotate(-90deg)">56'</div><div class="t" style="left:0.40px;top:359.58px;font-size:9.5px;color:#333;transform-origin:0 0;transform:rotate(-90deg)">54'</div><div class="t" style="left:0.40px;top:393.04px;font-size:9.5px;color:#333;transform-origin:0 0;transform:rotate(-90deg)">52'</div><div class="t" style="left:0.40px;top:426.50px;font-size:9.5px;color:#333;transform-origin:0 0;transform:rotate(-90deg)">50'</div><div class="t" style="left:0.40px;top:459.96px;font-size:9.5px;color:#333;transform-origin:0 0;transform:rotate(-90deg)">48'</div><div class="t" style="left:0.40px;top:493.42px;font-size:9.5px;color:#333;transform-origin:0 0;transform:rotate(-90deg)">46'</div><div class="t" style="left:0.40px;top:526.88px;font-size:9.5px;color:#333;transform-origin:0 0;transform:rotate(-90deg)">44'</div><div class="t" style="left:0.40px;top:560.34px;font-size:9.5px;color:#333;transform-origin:0 0;transform:rotate(-90deg)">42'</div><div class="t" style="left:0.40px;top:593.80px;font-size:9.5px;color:#333;transform-origin:0 0;transform:rotate(-90deg)">40'</div></div>
<div class="t" style="left:122.00px;top:819.10px;font-size:12px;color:#2f5fa7;font-weight:700;letter-spacing:-0.581px;">Plan</div>
<div class="t" style="left:183.30px;top:819.10px;font-size:12px;color:#555;">All</div>
<svg class="a" style="left:540px;top:355px;z-index:2" width="290" height="160" viewBox="540 355 290 160"><path d="M637.5 382.7V503" stroke="#2f4f8f" stroke-width="1.4" stroke-dasharray="7.8 4.9"/><path d="M650.5 382.7V503" stroke="#2f4f8f" stroke-width="1.4" stroke-dasharray="7.8 4.9"/><path d="M662.5 382.7V503" stroke="#2f4f8f" stroke-width="1.4" stroke-dasharray="7.8 4.9"/><path d="M675.5 382.7V503" stroke="#2f4f8f" stroke-width="1.4" stroke-dasharray="7.8 4.9"/><path d="M688.5 382.7V503" stroke="#2f4f8f" stroke-width="1.4" stroke-dasharray="7.8 4.9"/><path d="M700.5 382.7V503" stroke="#2f4f8f" stroke-width="1.4" stroke-dasharray="7.8 4.9"/><path d="M713.5 382.7V503" stroke="#2f4f8f" stroke-width="1.4" stroke-dasharray="7.8 4.9"/><path d="M726.5 382.7V503" stroke="#2f4f8f" stroke-width="1.4" stroke-dasharray="7.8 4.9"/><path d="M738.5 382.7V503" stroke="#2f4f8f" stroke-width="1.4" stroke-dasharray="7.8 4.9"/><path d="M634 377.7H752.3M634 506.6H752.3M634 444.5H752.3" stroke="#2f4f8f" stroke-width="1.7" stroke-dasharray="8 4.6"/><path d="M618.6 378V507" stroke="#e04040" stroke-width="1.3" stroke-dasharray="6 3.5"/><path d="M758.8 378V507" stroke="#e04040" stroke-width="1.3" stroke-dasharray="6 3.5"/><path d="M624.3 380V505" stroke="#8aa0c8" stroke-width="2" stroke-dasharray="5 3"/><path d="M752.3 380V505" stroke="#3d5f9e" stroke-width="1.2" stroke-dasharray="6 4"/><path d="M562.6 375.0H621.0M562.6 509.3H621.0M755.3 375.0H813.8M755.3 509.3H813.8" stroke="#2b2b1a" stroke-width="4.2" fill="none"/><path d="M562.6 375.0H621.0M562.6 509.3H621.0M755.3 375.0H813.8M755.3 509.3H813.8" stroke="#9c9410" stroke-width="2" fill="none"/><path d="M562.6 375.0V509.3M813.8 375.0V509.3" stroke="#2b2b1a" stroke-width="4"/><path d="M562.6 375.0V509.3M813.8 375.0V509.3" stroke="#7a8a3a" stroke-width="1.4"/><path d="M565.1 378.0V506.3M565.6 377.5H618.0M565.6 506.8H618.0M811.3 378.0V506.3M758.3 377.5H810.8M758.3 506.8H810.8" stroke="#9cc0f0" stroke-width="0.8"/><path d="M621.0 375.0H755.3M621.0 509.3H755.3M621.0 442.2H755.3" stroke="#3a3a3a" stroke-width="3.8" fill="none"/><path d="M621.0 375.0H755.3M621.0 509.3H755.3M621.0 442.2H755.3" stroke="#c4c2a8" stroke-width="1.5" fill="none"/><path d="M621.0 375.0V509.3M755.3 375.0V509.3" stroke="#3a3a3a" stroke-width="4.0" fill="none"/><path d="M621.0 375.0V509.3M755.3 375.0V509.3" stroke="#c4c2a8" stroke-width="1.5" fill="none"/><path d="M621.4 378.5L638.1999999999999 390.2H627.9V495H638.1999999999999L621.4 504.7L604.6 495H614.9V390.2H604.6Z" fill="none" stroke="#111" stroke-width="1.3"/><path d="M755.3 377.9L771.6999999999999 390.1H761.5V494.8H771.6999999999999L755.3 505.5L738.9 494.8H749.0999999999999V390.1H738.9Z" fill="none" stroke="#111" stroke-width="1.3"/><path d="M592.6 389.2V496" stroke="#111" stroke-width="1.3"/><path d="M592.6 383.8L600.9 389.2H584.3000000000001Z M592.6 501.6L600.9 496H584.3000000000001Z" fill="#fff" stroke="#111" stroke-width="1.2"/><path d="M784.8 389.4V496.3" stroke="#111" stroke-width="1.3"/><path d="M784.8 384.0L793.0999999999999 389.4H776.5Z M784.8 501.7L793.0999999999999 496.3H776.5Z" fill="#fff" stroke="#111" stroke-width="1.2"/><circle cx="622.0" cy="442.2" r="3.2" fill="#333"/><circle cx="754.3" cy="442.2" r="3.2" fill="#333"/><circle cx="562.6" cy="375.0" r="3.2" fill="#3a3a3a" stroke="#1a1a1a" stroke-width="0.9"/><circle cx="562.6" cy="509.3" r="3.2" fill="#3a3a3a" stroke="#1a1a1a" stroke-width="0.9"/><circle cx="621.0" cy="375.0" r="3.2" fill="#3a3a3a" stroke="#1a1a1a" stroke-width="0.9"/><circle cx="621.0" cy="509.3" r="3.2" fill="#3a3a3a" stroke="#1a1a1a" stroke-width="0.9"/><circle cx="755.3" cy="375.0" r="3.2" fill="#3a3a3a" stroke="#1a1a1a" stroke-width="0.9"/><circle cx="755.3" cy="509.3" r="3.2" fill="#3a3a3a" stroke="#1a1a1a" stroke-width="0.9"/><circle cx="813.8" cy="375.0" r="3.2" fill="#3a3a3a" stroke="#1a1a1a" stroke-width="0.9"/><circle cx="813.8" cy="509.3" r="3.2" fill="#3a3a3a" stroke="#1a1a1a" stroke-width="0.9"/></svg>
<div class="t" style="left:573.80px;top:362.20px;font-size:11px;color:#1e1e1e;letter-spacing:-0.063px;">3'-6"SB</div>
<div class="t" style="left:766.50px;top:362.20px;font-size:11px;color:#1e1e1e;letter-spacing:-0.113px;">3'-6"SB</div>
<div class="t" style="left:676.90px;top:362.65px;font-size:11.5px;color:#1e1e1e;letter-spacing:0.000px;">8'-0"</div>
<div class="t" style="left:676.90px;top:430.35px;font-size:11.5px;color:#1e1e1e;letter-spacing:0.000px;">8'-0"</div>
<div class="t" style="z-index:3;left:543.55px;top:436.65px;font-size:11.5px;color:#1e1e1e;transform:rotate(-90deg);transform-origin:11.45px 5.75px">8'-0"</div>
<div class="t" style="z-index:3;left:577.16px;top:436.20px;font-size:12px;color:#1e1e1e;transform:rotate(-90deg);transform-origin:7.34px 6.00px">4P</div>
<div class="t" style="z-index:3;left:769.36px;top:436.00px;font-size:12px;color:#1e1e1e;transform:rotate(-90deg);transform-origin:7.34px 6.00px">4P</div>
<div class="t" style="z-index:3;left:601.85px;top:403.25px;font-size:11.5px;color:#1e1e1e;transform:rotate(-90deg);transform-origin:11.45px 5.75px">4'-0"</div>
<div class="t" style="z-index:3;left:601.85px;top:469.75px;font-size:11.5px;color:#1e1e1e;transform:rotate(-90deg);transform-origin:11.45px 5.75px">4'-0"</div>
<div class="t" style="z-index:3;left:601.85px;top:436.65px;font-size:11.5px;color:#1e1e1e;transform:rotate(-90deg);transform-origin:11.45px 5.75px">8'-0"</div>
<div class="t" style="z-index:3;left:733.85px;top:436.65px;font-size:11.5px;color:#1e1e1e;transform:rotate(-90deg);transform-origin:11.45px 5.75px">8'-0"</div>
<div class="t" style="left:570.50px;top:490.30px;font-size:10px;color:#2828a8;z-index:3;">27</div>
<div class="t" style="left:629.70px;top:431.00px;font-size:10px;color:#2828a8;z-index:3;">20</div>
<div class="t" style="left:629.70px;top:484.30px;font-size:10px;color:#2828a8;z-index:3;">2</div>
<div class="t" style="left:629.70px;top:497.70px;font-size:10px;color:#2828a8;z-index:3;">19</div>
<div class="t" style="left:764.50px;top:484.60px;font-size:10px;color:#2828a8;z-index:3;">2</div>
<div class="t" style="left:764.50px;top:491.30px;font-size:10px;color:#2828a8;z-index:3;">24</div>
<div class="t" style="left:764.50px;top:498.20px;font-size:10px;color:#2828a8;z-index:3;">2</div>
<svg class="a" style="left:1070px;top:435px;z-index:5" width="40" height="52" viewBox="1070 435 40 52"><path d="M1078.6 443.5L1078.6 474L1086.6 469L1093.5 480.6Q1096 482.2 1098.3 479.6L1092.6 467.2L1102.2 466.6Q1103.2 465.2 1102 464.2Z" fill="#f7f7f7" stroke="#0a0a0a" stroke-width="2.2" stroke-linejoin="round"/></svg>
<div class="a" style="left:1444px;top:162px;width:446px;height:683px;background:#fdfdfd;"></div>
<div class="a" style="left:1446px;top:164px;width:442px;height:681px;background:#ececec;"></div>
<div class="a" style="left:1447px;top:164px;width:440px;height:25px;background:linear-gradient(#e4e4e4,#dadada);"></div>
<div class="t" style="left:1454.00px;top:171.35px;font-size:11.5px;color:#1e1e1e;font-weight:700;">3D View</div>
<svg class="a" style="left:1440px;top:160px;" width="452" height="90" viewBox="1440 160 452 90"><path d="M1852 172H1858M1853.5 172V177M1856.5 172V177M1851 177H1859M1855 177V181.5" stroke="#333" stroke-width="1.1" fill="none"/><path d="M1872 172L1880 180M1880 172L1872 180" stroke="#444" stroke-width="1"/><rect x="1447" y="189" width="440" height="28" fill="#f3f3f3"/><rect x="1450.5" y="192.5" width="91" height="25" fill="#dcdcdc" stroke="#bdbdbd"/><rect x="1541.5" y="189.5" width="70" height="28" fill="#f5f5f5" stroke="#bdbdbd"/><path d="M1456 198.5L1463 195.5L1470 198.5V206.5L1463 210.5L1456 206.5Z" fill="#e8f3fb" stroke="#3a9ad9" stroke-width="1.2"/><path d="M1456 198.5L1463 201.5L1470 198.5M1463 201.5V210.5" stroke="#3a9ad9" stroke-width="1" fill="none"/><path d="M1550 197.5L1557 194.5L1564 197.5V205.5L1557 209.5L1550 205.5Z" fill="#5fb0e8" stroke="#3a9ad9" stroke-width="1.2"/><path d="M1550 197.5L1557 200.5L1564 197.5M1557 200.5V209.5" stroke="#3a9ad9" stroke-width="1" fill="none"/><rect x="1447.5" y="217.5" width="439" height="25.5" fill="#f7f7f7" stroke="#cfcfcf"/></svg>
<div class="t" style="left:1475.50px;top:197.30px;font-size:12px;color:#333;letter-spacing:-0.012px;">Conceptual</div>
<div class="t" style="left:1569.50px;top:196.30px;font-size:12px;color:#333;">Model</div>
<svg class="a" style="left:1446px;top:217px;" width="442" height="27" viewBox="1446 217 442 27"><path d="M1458.5 223.5V236L1461.5 233L1464 238.5L1466 237.5L1463.5 232.3H1467.5Z" fill="#111"/><circle cx="1487.5" cy="228.5" r="4.6" fill="none" stroke="#222" stroke-width="1.5"/><path d="M1491 232L1495.5 236.5" stroke="#222" stroke-width="1.8"/><path d="M1510.5 224.5H1514.5M1510.5 224.5V228.5M1522.5 224.5H1518.5M1522.5 224.5V228.5M1510.5 236.5H1514.5M1510.5 236.5V232.5M1522.5 236.5H1518.5M1522.5 236.5V232.5M1511 225L1514 228M1522 225L1519 228M1511 236L1514 233M1522 236L1519 233" stroke="#111" stroke-width="1.4"/><rect x="1536.5" y="223.5" width="13" height="13" fill="none" stroke="#3a7ad0" stroke-dasharray="1.5 1"/><circle cx="1543" cy="229.5" r="3.7" fill="none" stroke="#222" stroke-width="1.4"/><path d="M1545.8 232.3L1549.5 236" stroke="#222" stroke-width="1.6"/><path d="M1563 229.5Q1570 222 1578 229.5Q1570 237 1563 229.5Z" fill="none" stroke="#222" stroke-width="1.2"/><circle cx="1570.5" cy="229.5" r="2.5" fill="none" stroke="#222" stroke-width="1.2"/><circle cx="1565.5" cy="235" r="2.3" fill="none" stroke="#222"/><path d="M1592 227A7 7 0 0 0 1598 238M1601 222A7 7 0 0 1 1604 234" fill="none" stroke="#222" stroke-width="1.3"/><text x="1594" y="233" font-family="Liberation Sans" font-size="7" fill="#222">3D</text><path d="M1625 222V238M1617 230H1633M1622 225L1625 221.5L1628 225M1622 235L1625 238.5L1628 235M1620 227L1616.5 230L1620 233M1630 227L1633.5 230L1630 233" fill="none" stroke="#111" stroke-width="1.5"/><rect x="1645.5" y="226.5" width="10" height="10" fill="#fff" stroke="#222" stroke-width="1.3"/><path d="M1649 226.5V223H1659V233H1655.5" fill="none" stroke="#222" stroke-width="1.3"/><path d="M1662 229H1668L1665 232Z" fill="#222"/><path d="M1680.5 225.5L1686.5 222L1696.5 224.5V233.5L1690.5 238L1680.5 235Z" fill="#d6ecfa" stroke="#3a98d8" stroke-width="1.3" stroke-linejoin="round"/><path d="M1680.5 225.5L1690.5 228.5L1696.5 224.5M1690.5 228.5V238" fill="none" stroke="#3a98d8" stroke-width="1.1"/><path d="M1684 237.5L1693.5 227.5L1695.5 229.5L1686 239Z" fill="#6a6a6a" stroke="#333" stroke-width="0.8"/><path d="M1684 237.5L1683 240L1686 239" fill="#222"/><path d="M1699.5 229H1705.5L1702.5 232Z" fill="#222"/><path d="M1720.5 225.5H1722.5Q1724.5 222 1726.5 225.5H1728.5V236.5H1720.5Z" fill="#fff" stroke="#222" stroke-width="1.2"/><rect x="1726.5" y="231.5" width="7" height="6.5" fill="#fff" stroke="#222" stroke-width="1.1"/><path d="M1727.5 237L1730 234L1732.5 237" fill="none" stroke="#555" stroke-width="0.8"/><path d="M1746 234V229Q1747 223 1753 223Q1758 223 1760 228" fill="none" stroke="#222" stroke-width="1.2"/><rect x="1744.5" y="232.5" width="3" height="3" fill="#222"/><circle cx="1748" cy="223.5" r="1.5" fill="#222"/><circle cx="1753" cy="223" r="1.6" fill="none" stroke="#222"/><circle cx="1759" cy="223.5" r="1.5" fill="#222"/><rect x="1754.5" y="230.5" width="6" height="7" fill="#fff" stroke="#222" stroke-width="1.1"/><path d="M1773.5 224Q1771 230 1773.5 236M1786 224Q1788.5 230 1786 236" fill="none" stroke="#333" stroke-width="1.2"/><path d="M1784 225.5Q1780 223 1776.5 225.5Q1774.5 228 1779.8 230Q1785 232 1783 234.5Q1779.5 237 1775.5 234.5" fill="none" stroke="#2a56d0" stroke-width="2.4"/><path d="M1798.5 225.5L1804.5 222L1814.5 224.5V233.5L1808.5 238L1798.5 235Z" fill="#e4f2fb" stroke="#3a98d8" stroke-width="1.3" stroke-linejoin="round"/><path d="M1798.5 225.5L1808.5 228.5L1814.5 224.5M1808.5 228.5V238" fill="none" stroke="#3a98d8" stroke-width="1.1"/><circle cx="1803.5" cy="234" r="3.6" fill="#d8d8d8" stroke="#555" stroke-width="1.4" stroke-dasharray="1.5 0.8"/><circle cx="1803.5" cy="234" r="1.2" fill="#555"/></svg>
<svg class="a" style="left:1446px;top:240px;" width="444" height="605" viewBox="1446 240 444 605"><defs><linearGradient id="vg" x1="0" y1="0" x2="0" y2="1"><stop offset="0" stop-color="#6f6f6f"/><stop offset="0.45" stop-color="#a9a9a9"/><stop offset="1" stop-color="#f2f2f2"/></linearGradient></defs><rect x="1449" y="243" width="437" height="598" fill="url(#vg)"/><rect x="1448.5" y="242.5" width="438" height="598" fill="none" stroke="#8c8c8c" stroke-width="1.4"/><path d="M1603.2 679.9L1620.1 684.5L1628.0 677.9L1611.1 673.3Z" fill="#a24a26" stroke="#6e3218" stroke-width="0.8"/><path d="M1615.6 678.9L1615.6 674.9" stroke="#9aa2aa" stroke-width="3.5"/><path d="M1629.6 658.1L1646.5 662.7L1654.4 656.1L1637.5 651.5Z" fill="#a24a26" stroke="#6e3218" stroke-width="0.8"/><path d="M1642.0 657.1L1642.0 653.1" stroke="#9aa2aa" stroke-width="3.5"/><path d="M1656.0 636.3L1672.9 640.9L1680.8 634.3L1663.9 629.7Z" fill="#a24a26" stroke="#6e3218" stroke-width="0.8"/><path d="M1668.4 635.3L1668.4 631.3" stroke="#9aa2aa" stroke-width="3.5"/><path d="M1693.2 704.3L1710.1 708.9L1718.0 702.3L1701.1 697.7Z" fill="#a24a26" stroke="#6e3218" stroke-width="0.8"/><path d="M1705.6 703.3L1705.6 699.3" stroke="#9aa2aa" stroke-width="3.5"/><path d="M1719.6 682.5L1736.5 687.1L1744.4 680.5L1727.5 675.9Z" fill="#a24a26" stroke="#6e3218" stroke-width="0.8"/><path d="M1732.0 681.5L1732.0 677.5" stroke="#9aa2aa" stroke-width="3.5"/><path d="M1746.0 660.7L1762.9 665.3L1770.8 658.7L1753.9 654.1Z" fill="#a24a26" stroke="#6e3218" stroke-width="0.8"/><path d="M1758.4 659.7L1758.4 655.7" stroke="#9aa2aa" stroke-width="3.5"/><path d="M1668.4 632.3L1668.4 289.3" stroke="#46525c" stroke-width="3"/><path d="M1668.4 617.3L1668.4 614.8" stroke="#a2acb5" stroke-width="4.2"/><path d="M1668.4 579.3L1668.4 576.8" stroke="#a2acb5" stroke-width="4.2"/><path d="M1668.4 541.3L1668.4 538.8" stroke="#a2acb5" stroke-width="4.2"/><path d="M1668.4 503.3L1668.4 500.8" stroke="#a2acb5" stroke-width="4.2"/><path d="M1668.4 465.3L1668.4 462.8" stroke="#a2acb5" stroke-width="4.2"/><path d="M1668.4 427.3L1668.4 424.8" stroke="#a2acb5" stroke-width="4.2"/><path d="M1668.4 389.3L1668.4 386.8" stroke="#a2acb5" stroke-width="4.2"/><path d="M1668.4 351.3L1668.4 348.8" stroke="#a2acb5" stroke-width="4.2"/><path d="M1668.4 313.3L1668.4 310.8" stroke="#a2acb5" stroke-width="4.2"/><path d="M1758.4 656.7L1758.4 351.7" stroke="#46525c" stroke-width="3"/><path d="M1758.4 641.7L1758.4 639.2" stroke="#a2acb5" stroke-width="4.2"/><path d="M1758.4 603.7L1758.4 601.2" stroke="#a2acb5" stroke-width="4.2"/><path d="M1758.4 565.7L1758.4 563.2" stroke="#a2acb5" stroke-width="4.2"/><path d="M1758.4 527.7L1758.4 525.2" stroke="#a2acb5" stroke-width="4.2"/><path d="M1758.4 489.7L1758.4 487.2" stroke="#a2acb5" stroke-width="4.2"/><path d="M1758.4 451.7L1758.4 449.2" stroke="#a2acb5" stroke-width="4.2"/><path d="M1758.4 413.7L1758.4 411.2" stroke="#a2acb5" stroke-width="4.2"/><path d="M1758.4 375.7L1758.4 373.2" stroke="#a2acb5" stroke-width="4.2"/><path d="M1668.4 619.3L1758.4 643.7" stroke="#1f9a1f" stroke-width="2.7"/><path d="M1668.4 472.3L1758.4 496.7" stroke="#1f9a1f" stroke-width="2.7"/><path d="M1668.4 325.3L1758.4 349.7" stroke="#1f9a1f" stroke-width="2.7"/><path d="M1668.4 327.3L1758.4 351.7" stroke="#1f9a1f" stroke-width="2.7"/><path d="M1668.4 583.3L1758.4 607.7" stroke="#1f9a1f" stroke-width="2.7"/><path d="M1668.4 435.3L1758.4 459.7" stroke="#1f9a1f" stroke-width="2.7"/><path d="M1668.4 595.3L1758.4 559.7" stroke="#6f4fd0" stroke-width="1.6"/><path d="M1732.0 594.5L1642.0 494.1L1668.4 472.3L1758.4 572.7Z" fill="#8a9cc4" stroke="#2d56c4" stroke-width="0.8"/><path d="M1725.8 585.0L1749.6 565.4" stroke="#3a6ae6" stroke-width="4.2"/><path d="M1718.3 576.7L1742.1 557.1" stroke="#3a6ae6" stroke-width="4.2"/><path d="M1710.8 568.3L1734.6 548.7" stroke="#3a6ae6" stroke-width="4.2"/><path d="M1703.3 559.9L1727.1 540.3" stroke="#3a6ae6" stroke-width="4.2"/><path d="M1695.8 551.6L1719.6 532.0" stroke="#3a6ae6" stroke-width="4.2"/><path d="M1688.3 543.2L1712.1 523.6" stroke="#3a6ae6" stroke-width="4.2"/><path d="M1680.8 534.8L1704.6 515.2" stroke="#3a6ae6" stroke-width="4.2"/><path d="M1673.3 526.5L1697.1 506.9" stroke="#3a6ae6" stroke-width="4.2"/><path d="M1665.8 518.1L1689.6 498.5" stroke="#3a6ae6" stroke-width="4.2"/><path d="M1658.3 509.7L1682.1 490.1" stroke="#3a6ae6" stroke-width="4.2"/><path d="M1650.8 501.4L1674.6 481.8" stroke="#3a6ae6" stroke-width="4.2"/><path d="M1732.0 594.5L1642.0 494.1" stroke="#3566e0" stroke-width="4.2"/><path d="M1758.4 572.7L1668.4 472.3" stroke="#3566e0" stroke-width="4.2"/><path d="M1732.0 441.5L1642.0 347.1L1668.4 325.3L1758.4 419.7Z" fill="#8a9cc4" stroke="#2d56c4" stroke-width="0.8"/><path d="M1725.8 432.5L1749.6 412.9" stroke="#3a6ae6" stroke-width="4.2"/><path d="M1718.3 424.7L1742.1 405.1" stroke="#3a6ae6" stroke-width="4.2"/><path d="M1710.8 416.8L1734.6 397.2" stroke="#3a6ae6" stroke-width="4.2"/><path d="M1703.3 408.9L1727.1 389.3" stroke="#3a6ae6" stroke-width="4.2"/><path d="M1695.8 401.1L1719.6 381.5" stroke="#3a6ae6" stroke-width="4.2"/><path d="M1688.3 393.2L1712.1 373.6" stroke="#3a6ae6" stroke-width="4.2"/><path d="M1680.8 385.3L1704.6 365.7" stroke="#3a6ae6" stroke-width="4.2"/><path d="M1673.3 377.5L1697.1 357.9" stroke="#3a6ae6" stroke-width="4.2"/><path d="M1665.8 369.6L1689.6 350.0" stroke="#3a6ae6" stroke-width="4.2"/><path d="M1658.3 361.7L1682.1 342.1" stroke="#3a6ae6" stroke-width="4.2"/><path d="M1650.8 353.9L1674.6 334.3" stroke="#3a6ae6" stroke-width="4.2"/><path d="M1732.0 441.5L1642.0 347.1" stroke="#3566e0" stroke-width="4.2"/><path d="M1758.4 419.7L1668.4 325.3" stroke="#3566e0" stroke-width="4.2"/><path d="M1758.4 537.7L1668.4 437.3" stroke="#6f4fd0" stroke-width="2.3"/><path d="M1758.4 558.7L1668.4 458.3" stroke="#6f4fd0" stroke-width="2.3"/><path d="M1758.4 537.7L1668.4 437.3" stroke="#6f4fd0" stroke-width="2.3"/><path d="M1758.4 558.7L1668.4 458.3" stroke="#6f4fd0" stroke-width="2.3"/><path d="M1758.4 384.7L1668.4 290.3" stroke="#6f4fd0" stroke-width="2.3"/><path d="M1758.4 405.7L1668.4 311.3" stroke="#6f4fd0" stroke-width="2.3"/><path d="M1758.4 384.7L1668.4 290.3" stroke="#6f4fd0" stroke-width="2.3"/><path d="M1758.4 405.7L1668.4 311.3" stroke="#6f4fd0" stroke-width="2.3"/><path d="M1642.0 654.1L1642.0 311.1" stroke="#46525c" stroke-width="3"/><path d="M1642.0 639.1L1642.0 636.6" stroke="#a2acb5" stroke-width="4.2"/><path d="M1642.0 601.1L1642.0 598.6" stroke="#a2acb5" stroke-width="4.2"/><path d="M1642.0 563.1L1642.0 560.6" stroke="#a2acb5" stroke-width="4.2"/><path d="M1642.0 525.1L1642.0 522.6" stroke="#a2acb5" stroke-width="4.2"/><path d="M1642.0 487.1L1642.0 484.6" stroke="#a2acb5" stroke-width="4.2"/><path d="M1642.0 449.1L1642.0 446.6" stroke="#a2acb5" stroke-width="4.2"/><path d="M1642.0 411.1L1642.0 408.6" stroke="#a2acb5" stroke-width="4.2"/><path d="M1642.0 373.1L1642.0 370.6" stroke="#a2acb5" stroke-width="4.2"/><path d="M1642.0 335.1L1642.0 332.6" stroke="#a2acb5" stroke-width="4.2"/><path d="M1732.0 678.5L1732.0 373.5" stroke="#46525c" stroke-width="3"/><path d="M1732.0 663.5L1732.0 661.0" stroke="#a2acb5" stroke-width="4.2"/><path d="M1732.0 625.5L1732.0 623.0" stroke="#a2acb5" stroke-width="4.2"/><path d="M1732.0 587.5L1732.0 585.0" stroke="#a2acb5" stroke-width="4.2"/><path d="M1732.0 549.5L1732.0 547.0" stroke="#a2acb5" stroke-width="4.2"/><path d="M1732.0 511.5L1732.0 509.0" stroke="#a2acb5" stroke-width="4.2"/><path d="M1732.0 473.5L1732.0 471.0" stroke="#a2acb5" stroke-width="4.2"/><path d="M1732.0 435.5L1732.0 433.0" stroke="#a2acb5" stroke-width="4.2"/><path d="M1732.0 397.5L1732.0 395.0" stroke="#a2acb5" stroke-width="4.2"/><path d="M1642.0 349.1L1732.0 373.5" stroke="#1f9a1f" stroke-width="2.7"/><path d="M1642.0 570.1L1732.0 594.5" stroke="#1f9a1f" stroke-width="2.7"/><path d="M1642.0 417.1L1732.0 441.5" stroke="#1f9a1f" stroke-width="2.7"/><path d="M1732.0 559.5L1642.0 459.1" stroke="#6f4fd0" stroke-width="2.3"/><path d="M1732.0 580.5L1642.0 480.1" stroke="#6f4fd0" stroke-width="2.3"/><path d="M1732.0 559.5L1642.0 459.1" stroke="#6f4fd0" stroke-width="2.3"/><path d="M1732.0 580.5L1642.0 480.1" stroke="#6f4fd0" stroke-width="2.3"/><path d="M1732.0 406.5L1642.0 312.1" stroke="#6f4fd0" stroke-width="2.3"/><path d="M1732.0 427.5L1642.0 333.1" stroke="#6f4fd0" stroke-width="2.3"/><path d="M1732.0 406.5L1642.0 312.1" stroke="#6f4fd0" stroke-width="2.3"/><path d="M1732.0 427.5L1642.0 333.1" stroke="#6f4fd0" stroke-width="2.3"/><path d="M1576.2 652.2L1615.6 674.9" stroke="#a08a2a" stroke-width="2"/><path d="M1629.0 608.6L1668.4 631.3" stroke="#a08a2a" stroke-width="2"/><path d="M1576.2 652.2L1615.6 662.9L1668.4 619.3L1629.0 608.6Z" fill="#cdcdcd" stroke="#2c3838" stroke-width="3.6"/><path d="M1585.4 651.8L1632.9 612.6" stroke="#f2f2f2" stroke-width="1"/><path d="M1592.0 653.6L1639.5 614.4" stroke="#f2f2f2" stroke-width="1"/><path d="M1598.6 655.4L1646.1 616.1" stroke="#f2f2f2" stroke-width="1"/><path d="M1605.1 657.2L1652.6 617.9" stroke="#f2f2f2" stroke-width="1"/><path d="M1611.7 658.9L1659.2 619.7" stroke="#f2f2f2" stroke-width="1"/><path d="M1745.0 627.0L1705.6 646.3" stroke="#a08a2a" stroke-width="2"/><path d="M1797.8 583.4L1758.4 602.7" stroke="#a08a2a" stroke-width="2"/><path d="M1705.6 616.3L1745.0 627.0L1797.8 583.4L1758.4 572.7Z" fill="#cdcdcd" stroke="#2c3838" stroke-width="3.6"/><path d="M1714.8 615.9L1762.3 576.7" stroke="#f2f2f2" stroke-width="1"/><path d="M1721.4 617.7L1768.9 578.4" stroke="#f2f2f2" stroke-width="1"/><path d="M1727.9 619.5L1775.4 580.2" stroke="#f2f2f2" stroke-width="1"/><path d="M1734.5 621.2L1782.0 582.0" stroke="#f2f2f2" stroke-width="1"/><path d="M1741.1 623.0L1788.6 583.8" stroke="#f2f2f2" stroke-width="1"/><path d="M1576.2 505.2L1615.6 545.9" stroke="#a08a2a" stroke-width="2"/><path d="M1629.0 461.6L1668.4 502.3" stroke="#a08a2a" stroke-width="2"/><path d="M1576.2 505.2L1615.6 515.9L1668.4 472.3L1629.0 461.6Z" fill="#cdcdcd" stroke="#2c3838" stroke-width="3.6"/><path d="M1585.4 504.8L1632.9 465.6" stroke="#f2f2f2" stroke-width="1"/><path d="M1592.0 506.6L1639.5 467.4" stroke="#f2f2f2" stroke-width="1"/><path d="M1598.6 508.4L1646.1 469.1" stroke="#f2f2f2" stroke-width="1"/><path d="M1605.1 510.2L1652.6 470.9" stroke="#f2f2f2" stroke-width="1"/><path d="M1611.7 511.9L1659.2 472.7" stroke="#f2f2f2" stroke-width="1"/><path d="M1745.0 474.0L1705.6 493.3" stroke="#a08a2a" stroke-width="2"/><path d="M1797.8 430.4L1758.4 449.7" stroke="#a08a2a" stroke-width="2"/><path d="M1705.6 463.3L1745.0 474.0L1797.8 430.4L1758.4 419.7Z" fill="#cdcdcd" stroke="#2c3838" stroke-width="3.6"/><path d="M1714.8 462.9L1762.3 423.7" stroke="#f2f2f2" stroke-width="1"/><path d="M1721.4 464.7L1768.9 425.4" stroke="#f2f2f2" stroke-width="1"/><path d="M1727.9 466.5L1775.4 427.2" stroke="#f2f2f2" stroke-width="1"/><path d="M1734.5 468.2L1782.0 429.0" stroke="#f2f2f2" stroke-width="1"/><path d="M1741.1 470.0L1788.6 430.8" stroke="#f2f2f2" stroke-width="1"/><path d="M1576.2 358.2L1615.6 398.9" stroke="#a08a2a" stroke-width="2"/><path d="M1629.0 314.6L1668.4 355.3" stroke="#a08a2a" stroke-width="2"/><path d="M1576.2 358.2L1615.6 368.9L1668.4 325.3L1629.0 314.6Z" fill="#cdcdcd" stroke="#2c3838" stroke-width="3.6"/><path d="M1585.4 357.8L1632.9 318.6" stroke="#f2f2f2" stroke-width="1"/><path d="M1592.0 359.6L1639.5 320.4" stroke="#f2f2f2" stroke-width="1"/><path d="M1598.6 361.4L1646.1 322.1" stroke="#f2f2f2" stroke-width="1"/><path d="M1605.1 363.2L1652.6 323.9" stroke="#f2f2f2" stroke-width="1"/><path d="M1611.7 364.9L1659.2 325.7" stroke="#f2f2f2" stroke-width="1"/><path d="M1615.6 662.9L1705.6 616.3L1732.0 594.5L1642.0 641.1Z" fill="#8a9cc4" stroke="#2d56c4" stroke-width="0.8"/><path d="M1624.4 657.9L1648.2 638.3" stroke="#3a6ae6" stroke-width="4.2"/><path d="M1631.9 654.0L1655.7 634.4" stroke="#3a6ae6" stroke-width="4.2"/><path d="M1639.4 650.2L1663.2 630.5" stroke="#3a6ae6" stroke-width="4.2"/><path d="M1646.9 646.3L1670.7 626.7" stroke="#3a6ae6" stroke-width="4.2"/><path d="M1654.4 642.4L1678.2 622.8" stroke="#3a6ae6" stroke-width="4.2"/><path d="M1661.9 638.5L1685.7 618.9" stroke="#3a6ae6" stroke-width="4.2"/><path d="M1669.4 634.6L1693.2 615.0" stroke="#3a6ae6" stroke-width="4.2"/><path d="M1676.9 630.7L1700.7 611.1" stroke="#3a6ae6" stroke-width="4.2"/><path d="M1684.4 626.9L1708.2 607.2" stroke="#3a6ae6" stroke-width="4.2"/><path d="M1691.9 623.0L1715.7 603.4" stroke="#3a6ae6" stroke-width="4.2"/><path d="M1699.4 619.1L1723.2 599.5" stroke="#3a6ae6" stroke-width="4.2"/><path d="M1615.6 662.9L1705.6 616.3" stroke="#3566e0" stroke-width="4.2"/><path d="M1642.0 641.1L1732.0 594.5" stroke="#3566e0" stroke-width="4.2"/><path d="M1615.6 515.9L1705.6 463.3L1732.0 441.5L1642.0 494.1Z" fill="#8a9cc4" stroke="#2d56c4" stroke-width="0.8"/><path d="M1624.4 510.4L1648.2 490.8" stroke="#3a6ae6" stroke-width="4.2"/><path d="M1631.9 506.0L1655.7 486.4" stroke="#3a6ae6" stroke-width="4.2"/><path d="M1639.4 501.7L1663.2 482.0" stroke="#3a6ae6" stroke-width="4.2"/><path d="M1646.9 497.3L1670.7 477.7" stroke="#3a6ae6" stroke-width="4.2"/><path d="M1654.4 492.9L1678.2 473.3" stroke="#3a6ae6" stroke-width="4.2"/><path d="M1661.9 488.5L1685.7 468.9" stroke="#3a6ae6" stroke-width="4.2"/><path d="M1669.4 484.1L1693.2 464.5" stroke="#3a6ae6" stroke-width="4.2"/><path d="M1676.9 479.7L1700.7 460.1" stroke="#3a6ae6" stroke-width="4.2"/><path d="M1684.4 475.4L1708.2 455.7" stroke="#3a6ae6" stroke-width="4.2"/><path d="M1691.9 471.0L1715.7 451.4" stroke="#3a6ae6" stroke-width="4.2"/><path d="M1699.4 466.6L1723.2 447.0" stroke="#3a6ae6" stroke-width="4.2"/><path d="M1615.6 515.9L1705.6 463.3" stroke="#3566e0" stroke-width="4.2"/><path d="M1642.0 494.1L1732.0 441.5" stroke="#3566e0" stroke-width="4.2"/><path d="M1642.0 606.1L1732.0 559.5" stroke="#6f4fd0" stroke-width="2.3"/><path d="M1642.0 627.1L1732.0 580.5" stroke="#6f4fd0" stroke-width="2.3"/><path d="M1642.0 606.1L1732.0 559.5" stroke="#6f4fd0" stroke-width="2.3"/><path d="M1642.0 627.1L1732.0 580.5" stroke="#6f4fd0" stroke-width="2.3"/><path d="M1642.0 459.1L1732.0 406.5" stroke="#6f4fd0" stroke-width="2.3"/><path d="M1642.0 480.1L1732.0 427.5" stroke="#6f4fd0" stroke-width="2.3"/><path d="M1642.0 459.1L1732.0 406.5" stroke="#6f4fd0" stroke-width="2.3"/><path d="M1642.0 480.1L1732.0 427.5" stroke="#6f4fd0" stroke-width="2.3"/><path d="M1576.2 652.2L1576.2 615.2" stroke="#46525c" stroke-width="2.6"/><path d="M1629.0 608.6L1629.0 571.6" stroke="#46525c" stroke-width="2.6"/><path d="M1576.2 638.2L1629.0 594.6" stroke="#1f9a1f" stroke-width="2.7"/><path d="M1576.2 638.2L1615.6 648.9" stroke="#1f9a1f" stroke-width="2.7"/><path d="M1629.0 594.6L1668.4 605.3" stroke="#1f9a1f" stroke-width="2.7"/><path d="M1576.2 617.2L1629.0 573.6" stroke="#1f9a1f" stroke-width="2.7"/><path d="M1576.2 617.2L1615.6 627.9" stroke="#1f9a1f" stroke-width="2.7"/><path d="M1629.0 573.6L1668.4 584.3" stroke="#1f9a1f" stroke-width="2.7"/><path d="M1745.0 627.0L1745.0 590.0" stroke="#46525c" stroke-width="2.6"/><path d="M1797.8 583.4L1797.8 546.4" stroke="#46525c" stroke-width="2.6"/><path d="M1745.0 613.0L1797.8 569.4" stroke="#1f9a1f" stroke-width="2.7"/><path d="M1745.0 613.0L1705.6 602.3" stroke="#1f9a1f" stroke-width="2.7"/><path d="M1797.8 569.4L1758.4 558.7" stroke="#1f9a1f" stroke-width="2.7"/><path d="M1745.0 592.0L1797.8 548.4" stroke="#1f9a1f" stroke-width="2.7"/><path d="M1745.0 592.0L1705.6 581.3" stroke="#1f9a1f" stroke-width="2.7"/><path d="M1797.8 548.4L1758.4 537.7" stroke="#1f9a1f" stroke-width="2.7"/><path d="M1576.2 505.2L1576.2 468.2" stroke="#46525c" stroke-width="2.6"/><path d="M1629.0 461.6L1629.0 424.6" stroke="#46525c" stroke-width="2.6"/><path d="M1576.2 491.2L1629.0 447.6" stroke="#1f9a1f" stroke-width="2.7"/><path d="M1576.2 491.2L1615.6 501.9" stroke="#1f9a1f" stroke-width="2.7"/><path d="M1629.0 447.6L1668.4 458.3" stroke="#1f9a1f" stroke-width="2.7"/><path d="M1576.2 470.2L1629.0 426.6" stroke="#1f9a1f" stroke-width="2.7"/><path d="M1576.2 470.2L1615.6 480.9" stroke="#1f9a1f" stroke-width="2.7"/><path d="M1629.0 426.6L1668.4 437.3" stroke="#1f9a1f" stroke-width="2.7"/><path d="M1745.0 474.0L1745.0 437.0" stroke="#46525c" stroke-width="2.6"/><path d="M1797.8 430.4L1797.8 393.4" stroke="#46525c" stroke-width="2.6"/><path d="M1745.0 460.0L1797.8 416.4" stroke="#1f9a1f" stroke-width="2.7"/><path d="M1745.0 460.0L1705.6 449.3" stroke="#1f9a1f" stroke-width="2.7"/><path d="M1797.8 416.4L1758.4 405.7" stroke="#1f9a1f" stroke-width="2.7"/><path d="M1745.0 439.0L1797.8 395.4" stroke="#1f9a1f" stroke-width="2.7"/><path d="M1745.0 439.0L1705.6 428.3" stroke="#1f9a1f" stroke-width="2.7"/><path d="M1797.8 395.4L1758.4 384.7" stroke="#1f9a1f" stroke-width="2.7"/><path d="M1576.2 358.2L1576.2 321.2" stroke="#46525c" stroke-width="2.6"/><path d="M1629.0 314.6L1629.0 277.6" stroke="#46525c" stroke-width="2.6"/><path d="M1576.2 344.2L1629.0 300.6" stroke="#1f9a1f" stroke-width="2.7"/><path d="M1576.2 344.2L1615.6 354.9" stroke="#1f9a1f" stroke-width="2.7"/><path d="M1629.0 300.6L1668.4 311.3" stroke="#1f9a1f" stroke-width="2.7"/><path d="M1576.2 323.2L1629.0 279.6" stroke="#1f9a1f" stroke-width="2.7"/><path d="M1576.2 323.2L1615.6 333.9" stroke="#1f9a1f" stroke-width="2.7"/><path d="M1629.0 279.6L1668.4 290.3" stroke="#1f9a1f" stroke-width="2.7"/><path d="M1615.6 332.9L1668.4 289.3" stroke="#1f9a1f" stroke-width="2.7"/><path d="M1615.6 480.9L1668.4 437.3" stroke="#1f9a1f" stroke-width="2.7"/><path d="M1615.6 374.9L1668.4 331.3" stroke="#1f9a1f" stroke-width="2.7"/><path d="M1615.6 622.9L1668.4 579.3" stroke="#1f9a1f" stroke-width="2.7"/><path d="M1615.6 558.9L1668.4 515.3" stroke="#1f9a1f" stroke-width="2.7"/><path d="M1705.6 691.3L1758.4 647.7" stroke="#1f9a1f" stroke-width="2.7"/><path d="M1705.6 395.3L1758.4 351.7" stroke="#1f9a1f" stroke-width="2.7"/><path d="M1705.6 581.3L1758.4 537.7" stroke="#1f9a1f" stroke-width="2.7"/><path d="M1705.6 428.3L1758.4 384.7" stroke="#1f9a1f" stroke-width="2.7"/><path d="M1705.6 503.3L1758.4 459.7" stroke="#1f9a1f" stroke-width="2.7"/><path d="M1705.6 695.3L1732.0 591.5" stroke="#6f4fd0" stroke-width="1.8"/><path d="M1642.0 487.1L1732.0 431.5" stroke="#6f4fd0" stroke-width="1.6"/><path d="M1615.6 675.9L1615.6 332.9" stroke="#46525c" stroke-width="3"/><path d="M1615.6 660.9L1615.6 658.4" stroke="#a2acb5" stroke-width="4.2"/><path d="M1615.6 622.9L1615.6 620.4" stroke="#a2acb5" stroke-width="4.2"/><path d="M1615.6 584.9L1615.6 582.4" stroke="#a2acb5" stroke-width="4.2"/><path d="M1615.6 546.9L1615.6 544.4" stroke="#a2acb5" stroke-width="4.2"/><path d="M1615.6 508.9L1615.6 506.4" stroke="#a2acb5" stroke-width="4.2"/><path d="M1615.6 470.9L1615.6 468.4" stroke="#a2acb5" stroke-width="4.2"/><path d="M1615.6 432.9L1615.6 430.4" stroke="#a2acb5" stroke-width="4.2"/><path d="M1615.6 394.9L1615.6 392.4" stroke="#a2acb5" stroke-width="4.2"/><path d="M1615.6 356.9L1615.6 354.4" stroke="#a2acb5" stroke-width="4.2"/><path d="M1705.6 700.3L1705.6 395.3" stroke="#46525c" stroke-width="3"/><path d="M1705.6 685.3L1705.6 682.8" stroke="#a2acb5" stroke-width="4.2"/><path d="M1705.6 647.3L1705.6 644.8" stroke="#a2acb5" stroke-width="4.2"/><path d="M1705.6 609.3L1705.6 606.8" stroke="#a2acb5" stroke-width="4.2"/><path d="M1705.6 571.3L1705.6 568.8" stroke="#a2acb5" stroke-width="4.2"/><path d="M1705.6 533.3L1705.6 530.8" stroke="#a2acb5" stroke-width="4.2"/><path d="M1705.6 495.3L1705.6 492.8" stroke="#a2acb5" stroke-width="4.2"/><path d="M1705.6 457.3L1705.6 454.8" stroke="#a2acb5" stroke-width="4.2"/><path d="M1705.6 419.3L1705.6 416.8" stroke="#a2acb5" stroke-width="4.2"/><path d="M1615.6 627.9L1705.6 581.3" stroke="#6f4fd0" stroke-width="2.3"/><path d="M1615.6 648.9L1705.6 602.3" stroke="#6f4fd0" stroke-width="2.3"/><path d="M1615.6 627.9L1705.6 581.3" stroke="#6f4fd0" stroke-width="2.3"/><path d="M1615.6 648.9L1705.6 602.3" stroke="#6f4fd0" stroke-width="2.3"/><path d="M1615.6 480.9L1705.6 428.3" stroke="#6f4fd0" stroke-width="2.3"/><path d="M1615.6 501.9L1705.6 449.3" stroke="#6f4fd0" stroke-width="2.3"/><path d="M1615.6 480.9L1705.6 428.3" stroke="#6f4fd0" stroke-width="2.3"/><path d="M1615.6 501.9L1705.6 449.3" stroke="#6f4fd0" stroke-width="2.3"/><path d="M1615.6 664.9L1705.6 689.3" stroke="#1f9a1f" stroke-width="2.7"/><path d="M1615.6 626.9L1705.6 651.3" stroke="#1f9a1f" stroke-width="2.7"/><path d="M1615.6 515.9L1705.6 540.3" stroke="#1f9a1f" stroke-width="2.7"/><path d="M1615.6 370.9L1705.6 395.3" stroke="#1f9a1f" stroke-width="2.7"/><ellipse cx="1824.6" cy="327" rx="39.5" ry="19.5" fill="none" stroke="#606060" stroke-width="6.5"/><path d="M1817.7 276.6L1851.5 283.5L1833 299.7L1793.1 290Z" fill="#3c3c3c" stroke="#eee" stroke-width="1.3"/><path d="M1793.1 290L1833 299.7L1831.1 339.1L1796.9 325.2Z" fill="#363636" stroke="#eee" stroke-width="1.3"/><path d="M1833 299.7L1851.5 283.5L1849.6 319.6L1831.1 339.1Z" fill="#2f2f2f" stroke="#eee" stroke-width="1.3"/><text x="1801" y="318" font-family="Liberation Sans" font-size="8" font-weight="700" fill="#d0d0d0" transform="rotate(14 1812 315)">FRONT</text><text x="1812" y="289" font-family="Liberation Sans" font-size="6" font-weight="700" fill="#999" transform="rotate(-10 1818 287)">TOP</text><text x="1836" y="320" font-family="Liberation Sans" font-size="6" font-weight="700" fill="#aaa" transform="rotate(-50 1840 316)">RIGHT</text><text x="1789" y="352" font-family="Liberation Sans" font-weight="700" fill="#262626" stroke="#d8d8d8" paint-order="stroke" font-size="17" stroke-width="2.2" transform="rotate(-22 1797 346)">S</text><text x="1857" y="339" font-family="Liberation Sans" font-weight="700" fill="#262626" stroke="#d8d8d8" paint-order="stroke" font-size="13" stroke-width="1.8" transform="rotate(-28 1863 334)">E</text><text x="1781" y="313" font-family="Liberation Sans" font-weight="700" fill="#262626" stroke="#d8d8d8" paint-order="stroke" font-size="10" stroke-width="1.5" transform="rotate(-30 1788 308)">W</text><path d="M1497.3 792V773" stroke="#000" stroke-width="2.6"/><path d="M1493.3 773L1497.4 759.4L1501.7 773Z" fill="#000"/><path d="M1498 792L1513 778.5" stroke="#000" stroke-width="2.2"/><path d="M1507.5 779L1516.3 775.6L1512.5 784Z" fill="#000"/><path d="M1498 794L1516 800" stroke="#000" stroke-width="2.2"/><path d="M1516 795L1531.2 802.2L1515.5 803Z" fill="#000"/><rect x="1493.5" y="789" width="7" height="7" rx="1.5" fill="#000"/><text x="1500.5" y="756" font-family="Liberation Sans" font-size="12" fill="#555">Z</text><text x="1518.5" y="772.7" font-family="Liberation Sans" font-size="12" fill="#555">Y</text><text x="1533.5" y="799.6" font-family="Liberation Sans" font-size="12" fill="#555">X</text></svg>
<div class="a" style="left:2px;top:845px;width:1888px;height:235px;background:#efefef;"></div>
<div class="a" style="left:2px;top:848px;width:1885px;height:24px;background:linear-gradient(#dedede,#d8d8d8);"></div>
<div class="a" style="left:2px;top:871px;width:1885px;height:1px;background:#c6c6c6;"></div>
<div class="t" style="left:-11.60px;top:855.50px;font-size:12px;color:#262626;font-weight:700;letter-spacing:-0.392px;">Select a Bay)</div>
<svg class="a" style="left:0px;top:845px;" width="1892" height="235" viewBox="0 845 1892 235"><path d="M1851 857H1857M1852.5 857V862M1855.5 862V857M1850 862H1858M1854 862V866.5" stroke="#333" stroke-width="1.1" fill="none"/><path d="M1872 856L1880 864M1880 856L1872 864" stroke="#444" stroke-width="1"/><rect x="2" y="872" width="1885" height="33" fill="#dcdcdc"/><rect x="2" y="905" width="1888" height="5" fill="#e9e9e9"/><rect x="662" y="872" width="1" height="33" fill="#cbcbcb"/><rect x="106" y="877" width="1" height="22" fill="#c6c6c6"/><rect x="541" y="877" width="1" height="22" fill="#c6c6c6"/><g stroke="#bdbdbd" stroke-width="1" fill="none"><path d="M117 881L121 885M121 881L117 885"/><rect x="122.5" y="884.5" width="9" height="4"/><rect x="124.5" y="889.5" width="7" height="3"/><rect x="124.5" y="893.5" width="7" height="3"/><path d="M122 886.5V895H124"/></g><g stroke="#bdbdbd" stroke-width="1" fill="none"><rect x="235.5" y="881.5" width="10" height="3"/><rect x="235.5" y="885.5" width="10" height="3"/><rect x="235.5" y="889.5" width="10" height="3"/><rect x="235.5" y="893.5" width="10" height="3"/><path d="M248 883L249.5 884.5L251.5 881.5M248 888L249.5 889.5L251.5 886.5M248 893L249.5 894.5L251.5 891.5"/></g><g stroke="#bdbdbd" stroke-width="1" fill="none"><rect x="311.5" y="881.5" width="10" height="3"/><path d="M311.5 886.5H321.5"/><rect x="311.5" y="889.5" width="10" height="3"/><path d="M311.5 894.5H321.5"/><path d="M323 889L324.5 890.5L326.5 887.5"/></g><g stroke="#bdbdbd" stroke-width="1" fill="none"><rect x="432.5" y="881.5" width="7" height="3"/><rect x="432.5" y="889.5" width="7" height="3"/><path d="M432.5 886.5H439.5M432.5 894.5H439.5M441 881V897M443 883H450M443 887H450M443 891H450M443 895H450"/></g><g stroke="#bdbdbd" stroke-width="1" fill="none"><rect x="557.5" y="881.5" width="9" height="16"/><path d="M557.5 885.5H566.5M557.5 889.5H566.5M557.5 893.5H566.5M551 886Q550 881 555 882M553 880L555.5 882L553 884"/></g><rect x="2" y="910" width="1881.5" height="123.5" fill="#fdfdfd" stroke="#a9a9a9"/><rect x="2.5" y="910.5" width="1881" height="23" fill="#f0f0f0"/><rect x="2" y="933.5" width="1882" height="1" fill="#a9a9a9"/><rect x="8" y="911" width="1.2" height="23" fill="#a6a6a6"/><rect x="65.5" y="911" width="1.2" height="23" fill="#a6a6a6"/><rect x="150" y="911" width="1.2" height="23" fill="#a6a6a6"/><rect x="221" y="911" width="1.2" height="23" fill="#a6a6a6"/><rect x="294.5" y="911" width="1.2" height="23" fill="#a6a6a6"/><rect x="374" y="911" width="1.2" height="23" fill="#a6a6a6"/><rect x="445" y="911" width="1.2" height="23" fill="#a6a6a6"/><rect x="512.5" y="911" width="1.2" height="23" fill="#a6a6a6"/><rect x="579" y="911" width="1.2" height="23" fill="#a6a6a6"/><rect x="683.5" y="911" width="1.2" height="23" fill="#a6a6a6"/><rect x="746" y="911" width="1.2" height="23" fill="#a6a6a6"/><rect x="782" y="911" width="1.2" height="23" fill="#a6a6a6"/><rect x="831.5" y="911" width="1.2" height="23" fill="#a6a6a6"/><rect x="2" y="918" width="3" height="8" fill="#7ab8e8" opacity="0.6"/><rect x="2" y="1034" width="1888" height="7" fill="#f2f2f2"/><rect x="2" y="1038" width="1888" height="1" fill="#d4d4d4"/><rect x="2" y="1041" width="1888" height="29" fill="#dadada"/><rect x="2" y="1070" width="1888" height="2" fill="#f2f2f2"/><rect x="2" y="1072" width="1888" height="1" fill="#cfd6de"/><rect x="2" y="1073" width="1888" height="7" fill="#dfe9f6"/><rect x="1218" y="1043" width="1.3" height="25" fill="#b8b8b8"/><rect x="1287.5" y="1043" width="1.3" height="25" fill="#b8b8b8"/><rect x="1398" y="1043" width="1.3" height="25" fill="#b8b8b8"/><rect x="1495.5" y="1043" width="1.3" height="25" fill="#b8b8b8"/><rect x="1624" y="1043" width="1.3" height="25" fill="#b8b8b8"/><rect x="1774.5" y="1043" width="1.3" height="25" fill="#b8b8b8"/><rect x="1746" y="1043" width="25.6" height="25.6" fill="#f7a50a"/><path d="M1752.5 1053.5A6.5 6.5 0 0 1 1764.5 1052.5M1765 1058A6.5 6.5 0 0 1 1753 1059" fill="none" stroke="#1f6fd0" stroke-width="1.8"/><path d="M1762 1050L1766.5 1053.5L1767 1048Z M1755.5 1061.5L1751 1058L1750.5 1063.5Z" fill="#1f6fd0"/><rect x="1782.3" y="1049.3" width="13.5" height="13" fill="#fff" stroke="#111" stroke-width="1.5"/><path d="M1785.5 1052.5L1788.5 1055.5M1792.5 1052.5L1789.5 1055.5M1785.5 1059L1788.5 1056M1792.5 1059L1789.5 1056" stroke="#111" stroke-width="1.3"/><path d="M1784.3 1051.1H1788L1784.3 1054.8ZM1793.8 1051.1H1790.1L1793.8 1054.8ZM1784.3 1060.5H1788L1784.3 1056.8ZM1793.8 1060.5H1790.1L1793.8 1056.8Z" fill="#111"/><circle cx="1812.5" cy="1054.5" r="5" fill="none" stroke="#111" stroke-width="1.4"/><path d="M1816 1058L1821 1063" stroke="#111" stroke-width="1.9"/><path d="M1810 1054.5H1815" stroke="#3a86d1" stroke-width="1.3"/><circle cx="1874" cy="1054.5" r="5" fill="none" stroke="#111" stroke-width="1.4"/><path d="M1877.5 1058L1882.5 1063" stroke="#111" stroke-width="1.9"/><path d="M1871.5 1054.5H1876.5M1874 1052V1057" stroke="#3a86d1" stroke-width="1.3"/><rect x="1056" y="1076.5" width="41" height="6" rx="3" fill="#f2c8cc"/><circle cx="1085" cy="1080" r="4" fill="#1f4f8f"/><circle cx="1132" cy="1080" r="3" fill="#2aa040"/><rect x="1148" y="1077" width="40" height="5" rx="2" fill="#f4f7fb"/></svg>
<div class="t" style="left:3.20px;top:883.36px;font-size:11.4px;color:#a2a2a2;letter-spacing:-0.027px;">Remove Top Level</div>
<div class="t" style="left:137.50px;top:883.36px;font-size:11.4px;color:#a2a2a2;letter-spacing:-0.049px;">Remove Selected</div>
<div class="t" style="left:257.90px;top:883.34px;font-size:11.6px;color:#a2a2a2;letter-spacing:0.082px;">Plank all</div>
<div class="t" style="left:333.30px;top:883.36px;font-size:11.4px;color:#a2a2a2;letter-spacing:0.168px;">Plank every other</div>
<div class="t" style="left:455.40px;top:883.36px;font-size:11.4px;color:#a2a2a2;letter-spacing:0.430px;">Invert planked</div>
<div class="t" style="left:572.30px;top:883.36px;font-size:11.4px;color:#a2a2a2;letter-spacing:0.083px;">Reset overrides</div>
<div class="t" style="left:13.30px;top:916.64px;font-size:11.6px;color:#6e6e6e;">Planked</div>
<div class="t" style="left:71.40px;top:916.64px;font-size:11.6px;color:#6e6e6e;">Nodes in lift</div>
<div class="t" style="left:155.60px;top:916.64px;font-size:11.6px;color:#6e6e6e;">Guardrails</div>
<div class="t" style="left:226.00px;top:916.64px;font-size:11.6px;color:#6e6e6e;">Toeboards</div>
<div class="t" style="left:299.20px;top:916.64px;font-size:11.6px;color:#6e6e6e;">Vert. Braces</div>
<div class="t" style="left:379.20px;top:916.64px;font-size:11.6px;color:#6e6e6e;">Plan Brace</div>
<div class="t" style="left:449.60px;top:916.64px;font-size:11.6px;color:#6e6e6e;">Ties</div>
<div class="t" style="left:518.00px;top:916.64px;font-size:11.6px;color:#6e6e6e;">Ledgers</div>
<div class="t" style="left:584.20px;top:916.64px;font-size:11.6px;color:#6e6e6e;letter-spacing:0.025px;">Cantilever/Bracket</div>
<div class="t" style="left:688.40px;top:916.64px;font-size:11.6px;color:#6e6e6e;">Netting</div>
<div class="t" style="left:751.20px;top:916.64px;font-size:11.6px;color:#6e6e6e;">Skip</div>
<div class="t" style="left:787.80px;top:916.64px;font-size:11.6px;color:#6e6e6e;">More</div>
<div class="t" style="left:1171.70px;top:1050.15px;font-size:11.5px;color:#333;letter-spacing:-0.915px;">Bays:</div>
<div class="t" style="left:1205.80px;top:1050.15px;font-size:11.5px;color:#8a8a8a;">4</div>
<div class="t" style="left:1226.10px;top:1050.15px;font-size:11.5px;color:#333;letter-spacing:-0.523px;">Levels:</div>
<div class="t" style="left:1268.40px;top:1050.15px;font-size:11.5px;color:#8a8a8a;letter-spacing:-0.192px;">20</div>
<div class="t" style="left:1295.10px;top:1050.15px;font-size:11.5px;color:#333;letter-spacing:-0.127px;">Max elev:</div>
<div class="t" style="left:1352.30px;top:1050.15px;font-size:11.5px;color:#8a8a8a;letter-spacing:0.091px;">30.72 ft</div>
<div class="t" style="left:1405.80px;top:1050.15px;font-size:11.5px;color:#333;letter-spacing:0.135px;">Min elev:</div>
<div class="t" style="left:1462.40px;top:1050.15px;font-size:11.5px;color:#8a8a8a;letter-spacing:0.106px;">1.2 ft</div>
<div class="t" style="left:1503.20px;top:1050.15px;font-size:11.5px;color:#333;letter-spacing:0.279px;">Leg length:</div>
<div class="t" style="left:1571.80px;top:1050.15px;font-size:11.5px;color:#8a8a8a;letter-spacing:0.118px;">272.31 ft</div>
<div class="t" style="left:1631.30px;top:1050.15px;font-size:11.5px;color:#333;letter-spacing:0.258px;">Volume:</div>
<div class="t" style="left:1683.80px;top:1050.15px;font-size:11.5px;color:#8a8a8a;letter-spacing:0.045px;">3464.57 ft3</div>
<div class="t" style="left:1831.00px;top:1050.15px;font-size:11.5px;color:#333;letter-spacing:-0.471px;">133%</div>

</div>
</body></html>
